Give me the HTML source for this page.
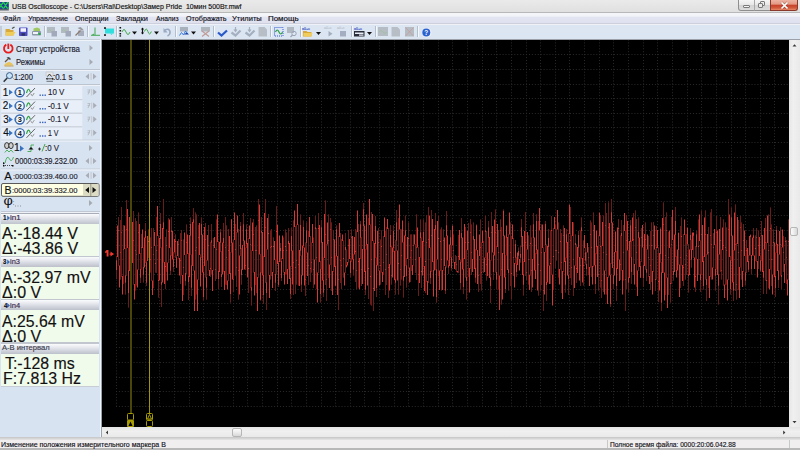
<!DOCTYPE html>
<html><head><meta charset="utf-8">
<style>
html,body{margin:0;padding:0;width:800px;height:450px;overflow:hidden;background:#d8e3f1;}
.t{position:absolute;white-space:pre;line-height:1;transform-origin:0 0;font-family:"Liberation Sans",sans-serif;-webkit-text-stroke:0.15px currentColor;}
.a{position:absolute;}
svg{position:absolute;overflow:visible;}
</style></head><body>
<!-- title bar -->
<div class="a" style="left:0;top:0;width:800px;height:12px;background:linear-gradient(#eaeaea,#e0e0e0);"></div>
<div class="a" style="left:0;top:12px;width:800px;height:1px;background:#b8b8b8;"></div>
<!-- app icon -->
<svg style="left:0;top:0" width="10" height="12"><rect x="0" y="2" width="8.8" height="8.5" fill="#5a6470"/><rect x="0" y="2" width="8.6" height="6.8" fill="#1e3c98"/>
<clipPath id="ic"><rect x="0" y="2" width="8.6" height="6.8"/></clipPath><path clip-path="url(#ic)" d="M0 3.8 q1.1 2.2 2.2 0 t2.2 0 t2.2 0 t2.2 0 M0 7.2 q1.1 -2.2 2.2 0 t2.2 0 t2.2 0 t2.2 0" stroke="#22d848" stroke-width="1.3" fill="none"/></svg>
<!-- window buttons -->
<div class="a" style="left:738px;top:0;width:17px;height:11px;background:linear-gradient(#f6f6f6,#e8e8e8 45%,#d4d4d4 55%,#dcdcdc);border:1px solid #8e8e8e;border-top:none;border-radius:0 0 0 3px;box-sizing:border-box;"></div>
<div class="a" style="left:743px;top:5px;width:7px;height:3px;border:1px solid #7a7a7a;background:#f4f4f4;box-sizing:border-box;border-radius:1px;"></div>
<div class="a" style="left:754px;top:0;width:16px;height:11px;background:linear-gradient(#f6f6f6,#e8e8e8 45%,#d4d4d4 55%,#dcdcdc);border-bottom:1px solid #8e8e8e;border-left:1px solid #a8a8a8;box-sizing:border-box;"></div>
<div class="a" style="left:760px;top:1px;width:5px;height:5px;border:1px solid #7a7a7a;border-radius:1px;box-sizing:border-box;"></div>
<div class="a" style="left:758px;top:3px;width:5px;height:5px;border:1px solid #7a7a7a;background:#e8e8e8;border-radius:1px;box-sizing:border-box;"></div>
<div class="a" style="left:770px;top:0;width:28px;height:11px;background:linear-gradient(#eeb4a4,#e49a84 40%,#c8442c 55%,#d25a3c 80%,#e88a6a);border:1px solid #8a3a2a;border-top:none;border-radius:0 0 3px 0;box-sizing:border-box;"></div>
<svg style="left:780px;top:1px" width="9" height="9"><path d="M1.5 1.5 L7.5 7.5 M7.5 1.5 L1.5 7.5" stroke="#6a3a30" stroke-width="2.6" fill="none" opacity="0.5"/><path d="M1.5 1.5 L7.5 7.5 M7.5 1.5 L1.5 7.5" stroke="#fff" stroke-width="1.7" fill="none"/></svg>
<!-- menu bar -->
<div class="a" style="left:0;top:13px;width:800px;height:10px;background:linear-gradient(#f5f6fa 0,#f2f3f8 30%,#e2e4f1 45%,#dfe1ef 100%);"></div>
<div class="a" style="left:0;top:23px;width:800px;height:1px;background:#cfd0de;"></div>
<!-- toolbar -->
<div class="a" style="left:0;top:24px;width:800px;height:15px;background:#dce6f2;"></div>
<div class="a" style="left:0;top:24px;width:800px;height:1px;background:#eef2f8;"></div>
<div class="a" style="left:0;top:26px;width:2px;height:11px;background:#c4ccd8;"></div>
<svg style="left:0;top:0" width="440" height="40">
<!-- separators -->
<g fill="#b4bfce"><rect x="44" y="26" width="1" height="11"/><rect x="87" y="26" width="1" height="11"/><rect x="116" y="26" width="1" height="11"/><rect x="175" y="26" width="1" height="11"/><rect x="213" y="26" width="1" height="11"/><rect x="270" y="26" width="1" height="11"/><rect x="300" y="26" width="1" height="11"/><rect x="351" y="26" width="1" height="11"/><rect x="375" y="26" width="1" height="11"/><rect x="417" y="26" width="1" height="11"/></g>
<g fill="#f4f7fb"><rect x="45" y="26" width="1" height="11"/><rect x="88" y="26" width="1" height="11"/><rect x="117" y="26" width="1" height="11"/><rect x="176" y="26" width="1" height="11"/><rect x="214" y="26" width="1" height="11"/><rect x="271" y="26" width="1" height="11"/><rect x="301" y="26" width="1" height="11"/><rect x="352" y="26" width="1" height="11"/><rect x="376" y="26" width="1" height="11"/><rect x="418" y="26" width="1" height="11"/></g>
<!-- folder open -->
<path d="M5.5 29 h4 l1 1 h3 v5.5 h-8 z" fill="#d8a838"/>
<path d="M6 32 h9.5 l-2 3.6 h-8 z" fill="#f0cc5a"/>
<path d="M12 28.5 l2.5 -1.5" stroke="#505050" stroke-width="1.2"/>
<!-- floppy -->
<rect x="19" y="27.5" width="8.5" height="8.5" rx="0.8" fill="#4a4cc0"/>
<rect x="20.5" y="28.2" width="5.5" height="3.6" fill="#f4f4ff"/>
<rect x="21.5" y="33.2" width="3.5" height="2.5" fill="#303060"/>
<!-- printer -->
<path d="M33.5 28.5 l3.5 -1 l3 1.2 v3 h-6.5z" fill="#9ec860"/>
<rect x="32" y="31" width="9" height="4.5" rx="1" fill="#8a98a8"/>
<rect x="33" y="32" width="5" height="2" fill="#f0f4f8"/>
<rect x="38.5" y="33" width="2" height="2" fill="#20b040"/>
<!-- gray duo 1 -->
<rect x="47" y="27" width="8" height="6" fill="#b4bac2"/>
<path d="M48 31 q1.5 -3 3 0 t3 0" stroke="#9cc09a" stroke-width="0.8" fill="none"/>
<rect x="51.5" y="31" width="5.5" height="5.5" fill="#a2a9ba"/>
<!-- gray duo 2 -->
<rect x="61" y="27" width="8" height="6" fill="#b4bac2"/>
<path d="M62 31 q1.5 -3 3 0 t3 0" stroke="#9cc09a" stroke-width="0.8" fill="none"/>
<rect x="65.5" y="31" width="5.5" height="5.5" fill="#a2a9ba"/>
<!-- hammer -->
<rect x="78" y="30.5" width="6" height="5.5" fill="#a6adbd"/>
<path d="M75.5 35.5 l5 -5" stroke="#8c7a70" stroke-width="1.2"/>
<path d="M77.5 28 l3 -1 l3 2.5 l-1.5 1z" fill="#9a9aa0"/>
<!-- trigger green -->
<path d="M95 27.5 v7.5 M91 35.3 h9" stroke="#40a850" stroke-width="1" fill="none"/>
<path d="M92 35 l1.2 -1.5 l1.2 1.5z" fill="#40a850"/>
<!-- cyan -->
<rect x="105" y="28.5" width="9" height="5" fill="#30dede"/>
<path d="M110 33.5 l1.5 1.5 l1.5 -1.5z" fill="#30dede"/>
<rect x="104" y="27.3" width="2" height="1.5" fill="#111"/><rect x="104" y="34.3" width="2" height="1.5" fill="#111"/>
<!-- icon 12 -->
<g fill="#111"><rect x="119.5" y="27" width="1.6" height="1.5"/><rect x="119.5" y="30" width="1.6" height="1.5"/><rect x="119.5" y="33" width="1.6" height="1.5"/><rect x="119.5" y="35.3" width="1.6" height="1.3"/></g>
<path d="M122 32 q2 -5 4 0 t4 0" stroke="#48a850" stroke-width="1" fill="none"/>
<path d="M132 31.5 h5 l-2.5 3z" fill="#111"/>
<!-- icon 13 -->
<path d="M142.5 28 v6" stroke="#111" stroke-width="1.2"/><path d="M141 29.5 l1.5 -2 l1.5 2z M141 32.5 l1.5 2 l1.5 -2z" fill="#111"/>
<path d="M144.5 31.5 q1.7 -5 3.4 0 t3.4 0" stroke="#48a850" stroke-width="1" fill="none"/>
<path d="M154 31.5 h5 l-2.5 3z" fill="#111"/>
<!-- undo -->
<path d="M165 30 q4 -2 5 1.5 q0.5 3 -2.5 4.5" stroke="#9aaac4" stroke-width="1.6" fill="none"/>
<path d="M163.5 28 v4.5 h4.2z" fill="#9aaac4"/>
<!-- icon 16 -->
<rect x="180" y="27" width="8" height="4.5" fill="#a8b0bc"/>
<path d="M179.5 35.5 l2 -3 l2 2.5 l2 -4 l2.5 3" stroke="#3a7ae0" stroke-width="1" fill="none"/>
<path d="M184 34.5 h5 l-2.5 -2z" fill="#2040a0"/>
<path d="M191 31.5 h5 l-2.5 3z" fill="#111"/>
<!-- gray X -->
<rect x="201" y="27" width="9" height="4.5" fill="#b0b6be"/>
<path d="M202 31 l7 5.5 M209 31 l-7 5.5" stroke="#c09a96" stroke-width="1.2"/>
<!-- blue check -->
<path d="M218 32.5 l3.5 3 l5.5 -5" stroke="#2a5ac8" stroke-width="2.2" fill="none"/>
<!-- gray checks -->
<path d="M231.5 32.5 l4 3 l5 -5" stroke="#a4b0c0" stroke-width="2.2" fill="none"/>
<path d="M235.5 27 v4 M234 29.5 l1.5 2 l1.5 -2" stroke="#a4b0c0" stroke-width="1.2" fill="none"/>
<path d="M245.5 32.5 l4 3 l5 -5" stroke="#a4b0c0" stroke-width="2.2" fill="none"/>
<path d="M249.5 27 v4 M248 29.5 l1.5 2 l1.5 -2" stroke="#a4b0c0" stroke-width="1.2" fill="none"/>
<!-- gray doc -->
<path d="M258.5 27 h6 l2.5 2.5 v7 h-8.5z" fill="#b8bec6"/>
<!-- green wave box -->
<rect x="274.5" y="27.5" width="8.5" height="8.5" fill="#dce6f6" stroke="#3a5ad0" stroke-width="1" stroke-dasharray="1 1"/>
<path d="M275.5 32 q1.7 -4 3.5 0 t3.5 0" stroke="#30a040" stroke-width="1.2" fill="none"/>
<!-- gray magnifier -->
<rect x="287" y="27" width="7" height="6" fill="#b0b8c2"/>
<circle cx="294" cy="33.5" r="2.2" fill="none" stroke="#9aa4b4" stroke-width="1"/>
<path d="M292.5 35 l-2 2" stroke="#9aa4b4" stroke-width="1.2"/>
<!-- abc folder -->
<text x="302" y="29.6" font-family="Liberation Sans" font-size="3.6" font-weight="700" fill="#3050c0">a0+c</text>
<path d="M303 31 h3.5 l1 1 h4 v4.5 h-8.5z" fill="#d8a838"/><path d="M303.5 33 h9 l-1.5 3.5 h-7.5z" fill="#f0cc5a"/>
<path d="M316 32 h5 l-2.5 3z" fill="#111"/>
<!-- gray play / stop -->
<text x="324" y="29.4" font-family="Liberation Sans" font-size="3.6" fill="#a8b0bc">a0+c</text>
<path d="M328.5 31 l4 2.7 l-4 2.7z" fill="#a4aec0"/>
<text x="337" y="29.4" font-family="Liberation Sans" font-size="3.6" fill="#a8b0bc">a0+c</text>
<rect x="340" y="31" width="6" height="5.5" fill="#a4aec0"/>
<!-- abc window -->
<text x="354" y="29.6" font-family="Liberation Sans" font-size="3.6" font-weight="700" fill="#3050c0">a0+c</text>
<rect x="354" y="31" width="10.5" height="5.5" fill="#2a2e3a"/><rect x="355" y="32.5" width="8.5" height="1.5" fill="#e8ecf4"/><rect x="359" y="34.5" width="4.5" height="1.2" fill="#e8ecf4"/>
<path d="M367 32 h5 l-2.5 3z" fill="#111"/>
<!-- gray set -->
<rect x="378" y="27" width="10" height="9" fill="#b6bcc4"/>
<path d="M379 32 q2 -3 4 0 t4 0" stroke="#9cc09a" stroke-width="0.8" fill="none"/>
<path d="M391.5 27 h6 l2.5 2.5 v7 h-8.5z" fill="#b8bec6"/>
<rect x="405" y="27" width="9" height="9.5" fill="#b6bcc4"/>
<path d="M405.5 27.5 l8 8.5 M413.5 27.5 l-8 8.5" stroke="#c89e9a" stroke-width="0.8"/>
<!-- help -->
<circle cx="426.8" cy="32.7" r="4.6" fill="#f4f6fa"/>
<circle cx="426.3" cy="32.5" r="4" fill="#2a62d0"/>
<text x="424.2" y="35.3" font-family="Liberation Sans" font-size="6.5" font-weight="700" fill="#fff">?</text>
</svg>

<!-- left panel -->
<div class="a" style="left:0;top:39px;width:102px;height:398px;background:#d8e3f1;"></div>
<div class="a" style="left:0;top:39px;width:102px;height:1px;background:#c8d0da;"></div><div class="a" style="left:0;top:40px;width:101px;height:1px;background:#eef3f9;"></div>
<div class="a" style="left:100px;top:39px;width:1px;height:399px;background:#f2f5fa;"></div>
<div class="a" style="left:101px;top:39px;width:1px;height:399px;background:#9aa2ae;"></div>
<!-- rows top -->
<svg style="left:0;top:0" width="102" height="440">
<!-- power icon -->
<path d="M6.3 44.6 A4.3 4.3 0 1 0 10.3 44.6" fill="none" stroke="#e81c1c" stroke-width="1.8"/>
<rect x="7.4" y="43.6" width="1.8" height="5.4" fill="#e81c1c"/>
<!-- hammer hat icon -->
<path d="M3.5 65.5 q3 -4 6 -3.5 q3 0.5 4 3.5 z" fill="#e8c460"/>
<path d="M4.5 66 h9" stroke="#c09030" stroke-width="0.8"/>
<path d="M5 62 l4 -4" stroke="#6a5040" stroke-width="1.2"/>
<path d="M6.5 57.5 l2.5 -0.5 l2 2 l-1 1z" fill="#404a50"/>
<!-- menu arrows -->
<path d="M89.5 45 l3.5 3 l-3.5 3z M89.5 59 l3.5 3 l-3.5 3z" fill="#a6aab2"/>
<!-- separators -->
<rect x="1" y="69" width="99" height="1" fill="#bcc4d0"/><rect x="1" y="70" width="99" height="1" fill="#eef2f8"/>
<rect x="1" y="84" width="99" height="1" fill="#bcc4d0"/><rect x="1" y="85" width="99" height="1" fill="#eef2f8"/>
<!-- magnifier -->
<circle cx="9.5" cy="75.6" r="3" fill="#c8e4fa" stroke="#3a5a80" stroke-width="1"/>
<path d="M7.2 78 l-3.5 3.8" stroke="#303840" stroke-width="1.6"/>
<path d="M12.5 77.5 l1 1" stroke="#555" stroke-width="0.8"/>
<!-- time scale icon -->
<rect x="46" y="72" width="7" height="4" fill="#e6e8ea" stroke="#b8bcc4" stroke-width="0.6"/>
<path d="M47.5 76.5 l2 -2.5 l2 2.5" stroke="#222" stroke-width="0.9" fill="none"/>
<path d="M46 78.8 h7.5" stroke="#222" stroke-width="0.8"/>
<path d="M46 78.8 l1.5 -1.3 v2.6z M53.5 78.8 l-1.5 -1.3 v2.6z" fill="#222"/>
<path d="M46.5 81.3 h6.5" stroke="#222" stroke-width="0.6"/>
<!-- lr arrows -->
<path d="M89 73.5 l-3.5 3 l3.5 3z M93 73.5 l3.5 3 l-3.5 3z" fill="#a8adb6"/><rect x="90.5" y="73" width="1.2" height="7" fill="#c8ccd4"/>
<!-- channel rows -->
<rect x="1.3" y="86" width="81" height="54" fill="#e8eff9"/>
<rect x="1.3" y="99" width="81" height="1.2" fill="#c9d0da"/>
<rect x="1.3" y="112.6" width="81" height="1.2" fill="#c9d0da"/>
<rect x="1.3" y="126.2" width="81" height="1.2" fill="#c9d0da"/>
<rect x="1" y="139.6" width="99" height="1" fill="#c4ccd8"/><rect x="1" y="140.6" width="99" height="1" fill="#f0f4f9"/>
<g id="ch">
<path d="M9 89.5 l3.8 2.8 l-3.8 2.8z" fill="#3a72c0"/>
<circle cx="19.8" cy="92.3" r="4.5" fill="#f4f8fc" stroke="#3a6ab0" stroke-width="1.4"/>
<path d="M14.6 90.5 l2 1.8 l-2 1.8z" fill="#3a72c0"/>
<path d="M26.5 93 q1.8 -7 3.8 -1" stroke="#30a040" stroke-width="1.2" fill="none"/>
<path d="M26.5 97 l8.5 -9" stroke="#555" stroke-width="0.9"/>
<path d="M31 94 q1.2 3.5 2.5 0 l0.8 -1" stroke="#888" stroke-width="0.9" fill="none"/>
<g fill="#3a62b8"><rect x="39.5" y="94.5" width="1.4" height="1.4"/><rect x="42" y="94.5" width="1.4" height="1.4"/><rect x="44.5" y="94.5" width="1.4" height="1.4"/></g>
<path d="M87.5 90 h2.5 M87.5 92 h2.5 M88 94.5 l2 -5" stroke="#b0b4bc" stroke-width="0.8"/>
<rect x="91" y="89" width="1.2" height="6.5" fill="#c8ccd4"/>
<path d="M93.2 89 l3.5 3 l-3.5 3z" fill="#a8adb6"/>
</g>
<use href="#ch" y="13.6"/><use href="#ch" y="27.2"/><use href="#ch" y="40.8"/>
<g font-family="Liberation Sans" font-weight="700" fill="#111" font-size="7.4">
<text x="17.7" y="95">1</text><text x="17.7" y="108.6">2</text><text x="17.7" y="122.2">3</text><text x="17.7" y="135.8">4</text>
</g>
<!-- trigger row -->
<ellipse cx="6.8" cy="145.6" rx="2.2" ry="3" fill="#cfcfcf" stroke="#333" stroke-width="1"/>
<ellipse cx="11" cy="145.6" rx="2.2" ry="3" fill="#cfcfcf" stroke="#333" stroke-width="1"/>
<path d="M4.8 152.5 l2.2 -2.5 l2 2 l2 -2 l2.2 2.5" stroke="#40a850" stroke-width="0.9" fill="none"/>
<path d="M20 145.5 l4 3 l-4 3z" fill="#3a72c0"/>
<path d="M27.5 151.5 h3.5 v-6.5 h3" stroke="#40a850" stroke-width="0.9" fill="none"/>
<path d="M28.5 149.5 l2.5 -2.5 l2.5 2.5z" fill="#111"/>
<path d="M38 149 h3" stroke="#111" stroke-width="0.8"/><path d="M39.5 147.5 v3" stroke="#111" stroke-width="0.8"/>
<path d="M42 151.5 l3 -7.5" stroke="#40a850" stroke-width="1" fill="none"/>
<path d="M89 145 l3.5 3 l-3.5 3z" fill="#a6aab2"/>
<!-- timestamp row icon -->
<path d="M5 163 q2 -9 4.5 -4 q2 4 4 -2" stroke="#40a850" stroke-width="0.9" fill="none"/>
<path d="M3 165.5 h10" stroke="#222" stroke-width="0.8" stroke-dasharray="1 1"/>
<path d="M3 162 l2 1.3 l-2 1.3z" fill="#111"/>
<rect x="3" y="165" width="1.5" height="1.5" fill="#111"/><rect x="12" y="165" width="1.5" height="1.5" fill="#111"/>
<path d="M89 158 l-3.5 3 l3.5 3z M93 158 l3.5 3 l-3.5 3z" fill="#a8adb6"/><rect x="90.5" y="157.5" width="1.2" height="7" fill="#c8ccd4"/>
<rect x="1" y="168.5" width="99" height="1" fill="#c4ccd8"/><rect x="1" y="169.5" width="99" height="1" fill="#f0f4f9"/>
<path d="M89 172.5 l-3.5 3 l3.5 3z M93 172.5 l3.5 3 l-3.5 3z" fill="#a8adb6"/><rect x="90.5" y="172" width="1.2" height="7" fill="#c8ccd4"/>
<!-- B box -->
<rect x="1.5" y="183.5" width="97.5" height="12.8" rx="1.5" fill="#ffffe3" stroke="#5a5a5a" stroke-width="1"/>
<rect x="83" y="184" width="15.5" height="12" fill="#dcdcc4"/>
<rect x="90.3" y="184" width="1" height="12" fill="#9a9a88"/>
<path d="M89 187 l-3.8 3 l3.8 3z M92.5 187 l3.8 3 l-3.8 3z" fill="#111"/>
<!-- phi row -->
<text x="3.6" y="205" font-family="Liberation Sans" font-size="12.5" fill="#111" transform="translate(3.6 205) scale(1.15 1) translate(-3.6 -205)">φ</text>
<g fill="#8a8f9a"><rect x="15" y="205.5" width="1" height="1"/><rect x="17.5" y="205.5" width="1" height="1"/><rect x="20" y="205.5" width="1" height="1"/><rect x="13.2" y="201" width="0.9" height="0.9"/><rect x="13.2" y="204" width="0.9" height="0.9"/></g>
<path d="M89 200 l3.5 3 l-3.5 3z" fill="#a6aab2"/>
<rect x="1" y="211" width="99" height="1" fill="#c0c8d4"/><rect x="1" y="212" width="99" height="1" fill="#eef2f8"/>
</svg>
<!-- value panels -->
<div class="a" style="left:1px;top:213px;width:98px;height:11px;background:linear-gradient(#a8adb8 0,#a8adb8 7%,#fafbfc 10%,#e6e8ee 40%,#bfc3cc 100%);"></div>
<div class="a" style="left:1px;top:224px;width:98px;height:31.5px;background:#f1fbec;"></div>
<div class="a" style="left:1px;top:255.5px;width:98px;height:1.5px;background:#c2c6ce;"></div>
<div class="a" style="left:1px;top:257px;width:98px;height:10px;background:linear-gradient(#fafbfc 0,#e6e8ee 35%,#bcc0ca 100%);"></div>
<div class="a" style="left:1px;top:267px;width:98px;height:31.5px;background:#f1fbec;"></div>
<div class="a" style="left:1px;top:298.5px;width:98px;height:1.5px;background:#c2c6ce;"></div>
<div class="a" style="left:1px;top:300px;width:98px;height:10px;background:linear-gradient(#fafbfc 0,#e6e8ee 35%,#bcc0ca 100%);"></div>
<div class="a" style="left:1px;top:310px;width:98px;height:32px;background:#f1fbec;"></div>
<div class="a" style="left:1px;top:342px;width:98px;height:1.5px;background:#c2c6ce;"></div>
<div class="a" style="left:1px;top:343.5px;width:98px;height:10px;background:linear-gradient(#fafbfc 0,#e6e8ee 35%,#bcc0ca 100%);"></div>
<div class="a" style="left:1px;top:353.5px;width:98px;height:32px;background:#f1fbec;"></div>
<div class="a" style="left:1px;top:385.5px;width:98px;height:1px;background:#c8ccd4;"></div>
<svg style="left:0;top:0" width="102" height="440">
<path d="M7.2 215.5 l2.8 2.5 l-2.8 2.5z M7.2 259.5 l2.8 2.5 l-2.8 2.5z M7.2 303 l2.8 2.5 l-2.8 2.5z" fill="#3a6ab8"/>
</svg>

<!-- scope -->
<div class="a" style="left:102px;top:39px;width:698px;height:1px;background:#9ca0a8;"></div>
<div class="a" style="left:102px;top:40px;width:687px;height:387px;background:#000;"></div>
<svg style="left:0;top:0" width="800" height="450">
<clipPath id="sc"><rect x="102" y="40" width="687" height="387"/></clipPath>
<g clip-path="url(#sc)">
<g stroke="#2a2a2a" stroke-width="1" stroke-dasharray="1 1.9288" fill="none"><line x1='116.5' y1='406.6' x2='116.5' y2='40' /><line x1='130.5' y1='406.6' x2='130.5' y2='40' /><line x1='145.5' y1='406.6' x2='145.5' y2='40' /><line x1='159.5' y1='406.6' x2='159.5' y2='40' /><line x1='174.5' y1='406.6' x2='174.5' y2='40' /><line x1='189.5' y1='406.6' x2='189.5' y2='40' /><line x1='203.5' y1='406.6' x2='203.5' y2='40' /><line x1='218.5' y1='406.6' x2='218.5' y2='40' /><line x1='233.5' y1='406.6' x2='233.5' y2='40' /><line x1='247.5' y1='406.6' x2='247.5' y2='40' /><line x1='262.5' y1='406.6' x2='262.5' y2='40' /><line x1='277.5' y1='406.6' x2='277.5' y2='40' /><line x1='291.5' y1='406.6' x2='291.5' y2='40' /><line x1='306.5' y1='406.6' x2='306.5' y2='40' /><line x1='321.5' y1='406.6' x2='321.5' y2='40' /><line x1='335.5' y1='406.6' x2='335.5' y2='40' /><line x1='350.5' y1='406.6' x2='350.5' y2='40' /><line x1='364.5' y1='406.6' x2='364.5' y2='40' /><line x1='379.5' y1='406.6' x2='379.5' y2='40' /><line x1='394.5' y1='406.6' x2='394.5' y2='40' /><line x1='408.5' y1='406.6' x2='408.5' y2='40' /><line x1='423.5' y1='406.6' x2='423.5' y2='40' /><line x1='438.5' y1='406.6' x2='438.5' y2='40' /><line x1='452.5' y1='406.6' x2='452.5' y2='40' /><line x1='467.5' y1='406.6' x2='467.5' y2='40' /><line x1='482.5' y1='406.6' x2='482.5' y2='40' /><line x1='496.5' y1='406.6' x2='496.5' y2='40' /><line x1='511.5' y1='406.6' x2='511.5' y2='40' /><line x1='526.5' y1='406.6' x2='526.5' y2='40' /><line x1='540.5' y1='406.6' x2='540.5' y2='40' /><line x1='555.5' y1='406.6' x2='555.5' y2='40' /><line x1='569.5' y1='406.6' x2='569.5' y2='40' /><line x1='584.5' y1='406.6' x2='584.5' y2='40' /><line x1='599.5' y1='406.6' x2='599.5' y2='40' /><line x1='613.5' y1='406.6' x2='613.5' y2='40' /><line x1='628.5' y1='406.6' x2='628.5' y2='40' /><line x1='643.5' y1='406.6' x2='643.5' y2='40' /><line x1='657.5' y1='406.6' x2='657.5' y2='40' /><line x1='672.5' y1='406.6' x2='672.5' y2='40' /><line x1='687.5' y1='406.6' x2='687.5' y2='40' /><line x1='701.5' y1='406.6' x2='701.5' y2='40' /><line x1='716.5' y1='406.6' x2='716.5' y2='40' /><line x1='731.5' y1='406.6' x2='731.5' y2='40' /><line x1='745.5' y1='406.6' x2='745.5' y2='40' /><line x1='760.5' y1='406.6' x2='760.5' y2='40' /><line x1='774.5' y1='406.6' x2='774.5' y2='40' /><line x1='116' y1='54.5' x2='789' y2='54.5' /><line x1='116' y1='69.5' x2='789' y2='69.5' /><line x1='116' y1='84.5' x2='789' y2='84.5' /><line x1='116' y1='98.5' x2='789' y2='98.5' /><line x1='116' y1='113.5' x2='789' y2='113.5' /><line x1='116' y1='127.5' x2='789' y2='127.5' /><line x1='116' y1='142.5' x2='789' y2='142.5' /><line x1='116' y1='157.5' x2='789' y2='157.5' /><line x1='116' y1='171.5' x2='789' y2='171.5' /><line x1='116' y1='186.5' x2='789' y2='186.5' /><line x1='116' y1='201.5' x2='789' y2='201.5' /><line x1='116' y1='215.5' x2='789' y2='215.5' /><line x1='116' y1='230.5' x2='789' y2='230.5' /><line x1='116' y1='245.5' x2='789' y2='245.5' /><line x1='116' y1='259.5' x2='789' y2='259.5' /><line x1='116' y1='274.5' x2='789' y2='274.5' /><line x1='116' y1='289.5' x2='789' y2='289.5' /><line x1='116' y1='303.5' x2='789' y2='303.5' /><line x1='116' y1='318.5' x2='789' y2='318.5' /><line x1='116' y1='333.5' x2='789' y2='333.5' /><line x1='116' y1='347.5' x2='789' y2='347.5' /><line x1='116' y1='362.5' x2='789' y2='362.5' /><line x1='116' y1='377.5' x2='789' y2='377.5' /><line x1='116' y1='391.5' x2='789' y2='391.5' /><line x1='116' y1='406.5' x2='789' y2='406.5' /></g>
<path fill='rgb(35,9,9)' d=''/>
<path fill='rgb(70,19,18)' d='M120 279h1v1h-1zM125 294h1v1h-1zM128 247h1v1h-1zM128 307h1v1h-1zM131 262h1v1h-1zM133 284h1v1h-1zM135 290h1v1h-1zM136 285h1v1h-1zM138 212h1v1h-1zM141 269h1v1h-1zM143 247h1v1h-1zM143 282h1v1h-1zM146 260h1v1h-1zM148 229h1v1h-1zM150 237h1v1h-1zM150 272h1v1h-1zM155 245h1v1h-1zM155 272h1v1h-1zM158 235h1v1h-1zM158 297h1v1h-1zM161 247h1v1h-1zM163 262h1v1h-1zM166 229h1v1h-1zM170 247h1v1h-1zM175 234h1v1h-1zM176 255h1v1h-1zM181 275h1v1h-1zM183 239h1v1h-1zM185 254h1v1h-1zM185 285h1v1h-1zM186 224h1v1h-1zM190 217h1v1h-1zM191 254h1v1h-1zM195 212h1v1h-1zM195 299h1v1h-1zM196 214h1v1h-1zM196 294h1v1h-1zM200 254h1v1h-1zM201 217h1v1h-1zM203 265h1v1h-1zM203 300h1v1h-1zM205 277h1v1h-1zM206 299h1v1h-1zM208 270h1v1h-1zM211 274h1v1h-1zM213 270h1v1h-1zM215 247h1v1h-1zM216 219h1v1h-1zM225 284h1v1h-1zM226 225h1v1h-1zM230 302h1v1h-1zM231 252h1v1h-1zM233 239h1v1h-1zM235 275h1v1h-1zM238 299h1v1h-1zM241 284h1v1h-1zM243 245h1v1h-1zM245 247h1v1h-1zM246 224h1v1h-1zM251 250h1v1h-1zM251 305h1v1h-1zM253 272h1v1h-1zM256 225h1v1h-1zM258 277h1v1h-1zM260 300h1v1h-1zM268 275h1v1h-1zM270 230h1v1h-1zM270 279h1v1h-1zM273 237h1v1h-1zM273 272h1v1h-1zM275 259h1v1h-1zM276 274h1v1h-1zM283 237h1v1h-1zM283 272h1v1h-1zM285 229h1v1h-1zM285 274h1v1h-1zM286 232h1v1h-1zM286 274h1v1h-1zM288 269h1v1h-1zM293 220h1v1h-1zM296 224h1v1h-1zM296 284h1v1h-1zM298 224h1v1h-1zM298 285h1v1h-1zM300 214h1v1h-1zM301 255h1v1h-1zM303 220h1v1h-1zM305 242h1v1h-1zM306 222h1v1h-1zM311 242h1v1h-1zM311 272h1v1h-1zM313 237h1v1h-1zM320 302h1v1h-1zM321 269h1v1h-1zM323 257h1v1h-1zM325 200h1v1h-1zM328 214h1v1h-1zM331 222h1v1h-1zM335 255h1v1h-1zM336 225h1v1h-1zM343 240h1v1h-1zM343 277h1v1h-1zM346 249h1v1h-1zM346 267h1v1h-1zM348 262h1v1h-1zM350 277h1v1h-1zM351 229h1v1h-1zM353 275h1v1h-1zM358 287h1v1h-1zM363 249h1v1h-1zM366 249h1v1h-1zM370 224h1v1h-1zM370 304h1v1h-1zM371 305h1v1h-1zM373 240h1v1h-1zM376 257h1v1h-1zM380 239h1v1h-1zM380 284h1v1h-1zM381 230h1v1h-1zM381 272h1v1h-1zM390 264h1v1h-1zM391 284h1v1h-1zM393 225h1v1h-1zM395 294h1v1h-1zM398 294h1v1h-1zM400 285h1v1h-1zM401 229h1v1h-1zM401 279h1v1h-1zM403 297h1v1h-1zM405 215h1v1h-1zM406 287h1v1h-1zM408 222h1v1h-1zM410 234h1v1h-1zM411 234h1v1h-1zM413 234h1v1h-1zM413 265h1v1h-1zM416 214h1v1h-1zM420 219h1v1h-1zM420 257h1v1h-1zM421 237h1v1h-1zM423 219h1v1h-1zM425 222h1v1h-1zM430 247h1v1h-1zM436 302h1v1h-1zM438 215h1v1h-1zM440 229h1v1h-1zM441 227h1v1h-1zM441 290h1v1h-1zM443 229h1v1h-1zM443 270h1v1h-1zM445 265h1v1h-1zM446 267h1v1h-1zM451 270h1v1h-1zM453 234h1v1h-1zM453 262h1v1h-1zM460 259h1v1h-1zM460 289h1v1h-1zM461 262h1v1h-1zM465 277h1v1h-1zM466 249h1v1h-1zM466 299h1v1h-1zM471 224h1v1h-1zM473 222h1v1h-1zM473 259h1v1h-1zM475 282h1v1h-1zM476 224h1v1h-1zM476 250h1v1h-1zM478 255h1v1h-1zM480 219h1v1h-1zM481 242h1v1h-1zM481 290h1v1h-1zM485 215h1v1h-1zM486 280h1v1h-1zM491 260h1v1h-1zM495 209h1v1h-1zM495 272h1v1h-1zM496 289h1v1h-1zM498 289h1v1h-1zM500 219h1v1h-1zM501 304h1v1h-1zM503 209h1v1h-1zM506 255h1v1h-1zM508 290h1v1h-1zM510 222h1v1h-1zM511 299h1v1h-1zM518 247h1v1h-1zM518 259h1v1h-1zM520 262h1v1h-1zM523 295h1v1h-1zM528 235h1v1h-1zM528 284h1v1h-1zM530 225h1v1h-1zM530 275h1v1h-1zM531 237h1v1h-1zM533 259h1v1h-1zM536 214h1v1h-1zM538 295h1v1h-1zM540 290h1v1h-1zM541 224h1v1h-1zM543 247h1v1h-1zM545 252h1v1h-1zM546 244h1v1h-1zM550 230h1v1h-1zM555 224h1v1h-1zM556 260h1v1h-1zM558 222h1v1h-1zM558 277h1v1h-1zM560 269h1v1h-1zM563 225h1v1h-1zM565 257h1v1h-1zM565 292h1v1h-1zM571 235h1v1h-1zM573 222h1v1h-1zM575 234h1v1h-1zM576 244h1v1h-1zM578 257h1v1h-1zM580 230h1v1h-1zM581 217h1v1h-1zM583 240h1v1h-1zM583 285h1v1h-1zM585 247h1v1h-1zM585 264h1v1h-1zM586 275h1v1h-1zM590 220h1v1h-1zM590 267h1v1h-1zM591 222h1v1h-1zM593 212h1v1h-1zM598 235h1v1h-1zM598 290h1v1h-1zM600 287h1v1h-1zM601 245h1v1h-1zM603 215h1v1h-1zM606 294h1v1h-1zM608 202h1v1h-1zM608 277h1v1h-1zM613 267h1v1h-1zM615 252h1v1h-1zM620 235h1v1h-1zM621 270h1v1h-1zM623 280h1v1h-1zM625 230h1v1h-1zM628 292h1v1h-1zM630 257h1v1h-1zM631 240h1v1h-1zM635 210h1v1h-1zM635 264h1v1h-1zM638 217h1v1h-1zM645 222h1v1h-1zM645 269h1v1h-1zM651 222h1v1h-1zM656 279h1v1h-1zM658 247h1v1h-1zM660 227h1v1h-1zM660 262h1v1h-1zM663 202h1v1h-1zM666 212h1v1h-1zM670 247h1v1h-1zM670 302h1v1h-1zM673 239h1v1h-1zM673 280h1v1h-1zM678 232h1v1h-1zM681 217h1v1h-1zM681 265h1v1h-1zM685 234h1v1h-1zM685 279h1v1h-1zM688 292h1v1h-1zM691 239h1v1h-1zM691 267h1v1h-1zM696 259h1v1h-1zM698 219h1v1h-1zM700 240h1v1h-1zM701 210h1v1h-1zM703 289h1v1h-1zM705 210h1v1h-1zM705 279h1v1h-1zM710 212h1v1h-1zM711 279h1v1h-1zM715 244h1v1h-1zM715 290h1v1h-1zM716 269h1v1h-1zM718 304h1v1h-1zM721 249h1v1h-1zM721 279h1v1h-1zM723 219h1v1h-1zM723 285h1v1h-1zM725 222h1v1h-1zM726 227h1v1h-1zM726 284h1v1h-1zM730 294h1v1h-1zM731 207h1v1h-1zM735 204h1v1h-1zM736 299h1v1h-1zM740 267h1v1h-1zM741 222h1v1h-1zM741 279h1v1h-1zM745 255h1v1h-1zM745 285h1v1h-1zM750 234h1v1h-1zM750 255h1v1h-1zM751 274h1v1h-1zM755 235h1v1h-1zM758 230h1v1h-1zM760 255h1v1h-1zM765 280h1v1h-1zM766 242h1v1h-1zM768 214h1v1h-1zM770 207h1v1h-1zM770 269h1v1h-1zM771 224h1v1h-1zM773 229h1v1h-1zM775 252h1v1h-1zM780 275h1v1h-1zM785 264h1v1h-1zM788 219h1v1h-1z'/>
<path fill='rgb(105,29,27)' d='M116 256h1v4h-1zM116 270h1v9h-1zM117 225h1v1h-1zM118 217h1v13h-1zM118 231h1v35h-1zM119 265h1v1h-1zM119 287h1v1h-1zM120 220h1v32h-1zM120 253h1v26h-1zM121 207h1v25h-1zM121 233h1v44h-1zM122 294h1v1h-1zM123 225h1v24h-1zM123 250h1v34h-1zM124 225h1v1h-1zM125 248h1v27h-1zM125 283h1v11h-1zM126 200h1v29h-1zM126 230h1v46h-1zM128 248h1v22h-1zM128 293h1v14h-1zM130 199h1v27h-1zM130 227h1v55h-1zM131 263h1v18h-1zM131 301h1v7h-1zM133 211h1v29h-1zM133 241h1v43h-1zM134 299h1v1h-1zM135 218h1v32h-1zM135 251h1v39h-1zM136 221h1v33h-1zM136 255h1v30h-1zM137 269h1v1h-1zM137 287h1v1h-1zM138 213h1v19h-1zM138 233h1v37h-1zM140 253h1v16h-1zM140 278h1v5h-1zM141 234h1v13h-1zM141 248h1v21h-1zM142 229h1v1h-1zM143 248h1v19h-1zM143 275h1v7h-1zM144 237h1v1h-1zM144 267h1v1h-1zM145 223h1v8h-1zM145 238h1v25h-1zM146 261h1v1h-1zM146 283h1v3h-1zM148 230h1v11h-1zM148 242h1v16h-1zM149 257h1v1h-1zM149 267h1v1h-1zM150 238h1v21h-1zM150 260h1v12h-1zM151 228h1v19h-1zM151 248h1v33h-1zM152 280h1v1h-1zM153 228h1v26h-1zM153 255h1v33h-1zM155 246h1v17h-1zM155 264h1v8h-1zM156 217h1v33h-1zM156 251h1v22h-1zM158 236h1v44h-1zM158 281h1v16h-1zM159 280h1v1h-1zM160 213h1v11h-1zM160 239h1v9h-1zM161 248h1v34h-1zM161 285h1v22h-1zM162 282h1v1h-1zM163 199h1v23h-1zM163 229h1v33h-1zM165 237h1v29h-1zM165 267h1v22h-1zM166 230h1v15h-1zM166 246h1v26h-1zM167 262h1v1h-1zM167 280h1v1h-1zM168 218h1v13h-1zM168 232h1v31h-1zM169 219h1v1h-1zM170 248h1v7h-1zM170 271h1v4h-1zM171 217h1v13h-1zM171 232h1v24h-1zM172 259h1v1h-1zM173 252h1v7h-1zM173 267h1v5h-1zM174 252h1v1h-1zM175 235h1v6h-1zM175 242h1v16h-1zM176 256h1v1h-1zM178 239h1v5h-1zM178 245h1v14h-1zM179 275h1v1h-1zM180 233h1v27h-1zM180 261h1v23h-1zM181 230h1v10h-1zM181 241h1v34h-1zM183 240h1v27h-1zM183 268h1v27h-1zM184 232h1v1h-1zM185 255h1v18h-1zM185 281h1v4h-1zM186 225h1v17h-1zM186 243h1v31h-1zM187 234h1v1h-1zM188 253h1v23h-1zM188 282h1v18h-1zM190 218h1v6h-1zM190 236h1v19h-1zM191 255h1v10h-1zM191 288h1v8h-1zM193 208h1v11h-1zM193 223h1v48h-1zM194 270h1v1h-1zM195 213h1v37h-1zM195 251h1v48h-1zM196 215h1v32h-1zM196 248h1v46h-1zM197 279h1v1h-1zM198 225h1v12h-1zM198 238h1v42h-1zM200 255h1v2h-1zM200 286h1v1h-1zM201 218h1v6h-1zM201 235h1v23h-1zM202 234h1v1h-1zM202 272h1v1h-1zM203 266h1v6h-1zM203 297h1v3h-1zM205 223h1v16h-1zM205 240h1v37h-1zM206 260h1v17h-1zM206 288h1v11h-1zM207 260h1v1h-1zM208 225h1v20h-1zM208 246h1v24h-1zM210 242h1v26h-1zM210 269h1v8h-1zM211 224h1v16h-1zM211 243h1v31h-1zM213 238h1v7h-1zM213 246h1v24h-1zM215 248h1v21h-1zM215 270h1v11h-1zM216 220h1v29h-1zM216 250h1v29h-1zM217 214h1v1h-1zM218 241h1v30h-1zM218 279h1v10h-1zM220 229h1v3h-1zM220 243h1v9h-1zM221 251h1v23h-1zM221 277h1v10h-1zM222 242h1v1h-1zM222 274h1v1h-1zM223 223h1v15h-1zM223 243h1v29h-1zM225 217h1v30h-1zM225 248h1v36h-1zM226 226h1v31h-1zM226 258h1v27h-1zM227 280h1v1h-1zM227 289h1v1h-1zM228 229h1v21h-1zM228 251h1v30h-1zM230 252h1v21h-1zM230 294h1v8h-1zM231 243h1v9h-1zM232 242h1v1h-1zM232 279h1v1h-1zM233 240h1v39h-1zM233 280h1v12h-1zM234 212h1v1h-1zM235 224h1v25h-1zM235 250h1v25h-1zM236 232h1v35h-1zM236 268h1v19h-1zM237 215h1v1h-1zM237 232h1v1h-1zM238 229h1v41h-1zM238 271h1v28h-1zM239 255h1v1h-1zM239 294h1v1h-1zM240 222h1v4h-1zM240 249h1v7h-1zM241 248h1v21h-1zM241 275h1v9h-1zM243 213h1v11h-1zM243 241h1v4h-1zM244 240h1v1h-1zM244 269h1v1h-1zM245 248h1v17h-1zM245 266h1v4h-1zM246 225h1v4h-1zM246 244h1v4h-1zM247 277h1v1h-1zM248 238h1v30h-1zM248 269h1v24h-1zM249 225h1v1h-1zM250 218h1v26h-1zM250 245h1v43h-1zM251 251h1v36h-1zM251 291h1v14h-1zM252 222h1v1h-1zM253 219h1v15h-1zM253 235h1v37h-1zM254 295h1v1h-1zM255 227h1v23h-1zM255 251h1v34h-1zM256 226h1v24h-1zM256 251h1v42h-1zM258 199h1v21h-1zM258 221h1v56h-1zM259 204h1v1h-1zM259 254h1v1h-1zM260 254h1v18h-1zM261 217h1v14h-1zM261 233h1v40h-1zM262 275h1v1h-1zM263 256h1v19h-1zM263 295h1v9h-1zM265 199h1v28h-1zM265 228h1v55h-1zM266 249h1v33h-1zM266 293h1v17h-1zM267 249h1v1h-1zM268 214h1v19h-1zM268 234h1v41h-1zM270 231h1v16h-1zM270 248h1v31h-1zM271 229h1v17h-1zM271 247h1v29h-1zM273 238h1v8h-1zM273 247h1v25h-1zM275 260h1v14h-1zM275 283h1v8h-1zM276 206h1v25h-1zM276 232h1v42h-1zM278 261h1v2h-1zM278 285h1v2h-1zM279 235h1v1h-1zM280 243h1v5h-1zM280 251h1v11h-1zM281 258h1v3h-1zM281 278h1v3h-1zM282 235h1v1h-1zM283 238h1v12h-1zM283 251h1v21h-1zM284 284h1v1h-1zM285 230h1v16h-1zM285 247h1v27h-1zM286 233h1v17h-1zM286 251h1v23h-1zM288 228h1v13h-1zM288 244h1v25h-1zM290 266h1v12h-1zM290 294h1v5h-1zM291 228h1v8h-1zM291 251h1v16h-1zM292 250h1v1h-1zM292 284h1v1h-1zM293 221h1v41h-1zM293 263h1v32h-1zM294 210h1v1h-1zM295 226h1v41h-1zM295 268h1v26h-1zM296 225h1v35h-1zM296 261h1v23h-1zM298 225h1v39h-1zM298 265h1v20h-1zM300 215h1v10h-1zM300 251h1v5h-1zM301 256h1v19h-1zM301 285h1v7h-1zM302 245h1v1h-1zM302 275h1v1h-1zM303 221h1v6h-1zM303 246h1v2h-1zM304 247h1v1h-1zM304 285h1v1h-1zM305 243h1v36h-1zM305 280h1v16h-1zM306 223h1v7h-1zM306 243h1v10h-1zM307 252h1v1h-1zM308 231h1v34h-1zM308 266h1v19h-1zM310 236h1v32h-1zM310 269h1v13h-1zM311 243h1v19h-1zM311 263h1v9h-1zM313 238h1v31h-1zM313 270h1v18h-1zM314 259h1v1h-1zM314 284h1v1h-1zM315 216h1v11h-1zM315 229h1v31h-1zM316 228h1v29h-1zM316 258h1v31h-1zM317 272h1v1h-1zM317 302h1v1h-1zM318 213h1v15h-1zM318 229h1v44h-1zM320 261h1v8h-1zM320 294h1v8h-1zM321 220h1v7h-1zM321 243h1v26h-1zM322 280h1v1h-1zM323 258h1v22h-1zM323 293h1v4h-1zM325 201h1v33h-1zM325 235h1v50h-1zM326 244h1v35h-1zM326 280h1v21h-1zM327 222h1v1h-1zM327 244h1v1h-1zM328 215h1v25h-1zM328 241h1v37h-1zM329 264h1v1h-1zM330 218h1v11h-1zM330 230h1v35h-1zM331 223h1v34h-1zM331 258h1v33h-1zM333 230h1v9h-1zM333 240h1v32h-1zM334 239h1v1h-1zM335 256h1v10h-1zM336 226h1v3h-1zM336 256h1v1h-1zM338 236h1v43h-1zM338 280h1v30h-1zM340 233h1v27h-1zM340 261h1v22h-1zM341 239h1v26h-1zM341 266h1v23h-1zM342 234h1v1h-1zM343 241h1v17h-1zM343 259h1v18h-1zM344 272h1v1h-1zM344 285h1v1h-1zM345 233h1v14h-1zM345 250h1v23h-1zM346 250h1v15h-1zM347 265h1v1h-1zM348 230h1v15h-1zM348 246h1v16h-1zM350 258h1v3h-1zM350 273h1v4h-1zM351 230h1v7h-1zM351 238h1v24h-1zM352 259h1v1h-1zM353 254h1v5h-1zM353 270h1v5h-1zM354 254h1v1h-1zM355 229h1v22h-1zM355 252h1v30h-1zM356 231h1v39h-1zM356 271h1v18h-1zM357 210h1v1h-1zM358 224h1v37h-1zM358 262h1v25h-1zM359 289h1v1h-1zM360 221h1v3h-1zM360 238h1v21h-1zM361 237h1v32h-1zM361 270h1v16h-1zM363 203h1v6h-1zM363 226h1v23h-1zM364 225h1v1h-1zM365 249h1v22h-1zM365 290h1v5h-1zM366 214h1v1h-1zM366 245h1v4h-1zM367 285h1v1h-1zM368 218h1v50h-1zM368 269h1v30h-1zM370 225h1v51h-1zM370 277h1v27h-1zM371 212h1v47h-1zM371 260h1v45h-1zM373 241h1v47h-1zM373 289h1v22h-1zM375 216h1v10h-1zM375 244h1v14h-1zM376 258h1v7h-1zM376 288h1v9h-1zM377 265h1v1h-1zM378 228h1v14h-1zM378 243h1v28h-1zM379 270h1v1h-1zM379 285h1v1h-1zM380 240h1v25h-1zM380 266h1v18h-1zM381 231h1v15h-1zM381 247h1v25h-1zM383 236h1v26h-1zM383 263h1v12h-1zM384 217h1v1h-1zM385 231h1v38h-1zM385 270h1v25h-1zM386 227h1v27h-1zM386 255h1v30h-1zM388 228h1v39h-1zM388 268h1v30h-1zM389 290h1v1h-1zM390 225h1v10h-1zM390 247h1v17h-1zM391 246h1v29h-1zM391 276h1v8h-1zM392 247h1v1h-1zM392 277h1v1h-1zM393 226h1v5h-1zM393 248h1v4h-1zM395 240h1v39h-1zM395 283h1v11h-1zM396 210h1v12h-1zM396 241h1v10h-1zM397 250h1v1h-1zM397 280h1v1h-1zM398 218h1v45h-1zM398 264h1v30h-1zM399 204h1v1h-1zM399 229h1v1h-1zM400 229h1v40h-1zM400 270h1v15h-1zM401 230h1v25h-1zM401 256h1v23h-1zM402 220h1v1h-1zM402 242h1v1h-1zM403 242h1v34h-1zM403 281h1v16h-1zM404 235h1v1h-1zM405 216h1v14h-1zM405 236h1v30h-1zM406 258h1v7h-1zM406 276h1v11h-1zM408 223h1v15h-1zM408 239h1v29h-1zM409 267h1v1h-1zM409 282h1v1h-1zM410 235h1v22h-1zM410 258h1v24h-1zM411 235h1v15h-1zM411 251h1v20h-1zM413 235h1v10h-1zM413 246h1v19h-1zM414 234h1v1h-1zM414 244h1v1h-1zM415 244h1v15h-1zM415 260h1v13h-1zM416 215h1v32h-1zM416 248h1v32h-1zM417 227h1v1h-1zM417 247h1v1h-1zM418 247h1v27h-1zM418 275h1v21h-1zM420 220h1v12h-1zM420 238h1v19h-1zM421 238h1v33h-1zM421 272h1v16h-1zM422 275h1v1h-1zM423 220h1v12h-1zM423 242h1v25h-1zM425 223h1v38h-1zM425 262h1v31h-1zM426 215h1v27h-1zM426 243h1v39h-1zM428 207h1v32h-1zM428 240h1v43h-1zM429 215h1v1h-1zM430 248h1v23h-1zM430 278h1v6h-1zM431 210h1v25h-1zM431 236h1v36h-1zM433 261h1v9h-1zM433 296h1v1h-1zM434 270h1v1h-1zM435 213h1v12h-1zM435 230h1v40h-1zM436 259h1v10h-1zM436 297h1v5h-1zM437 259h1v1h-1zM438 216h1v22h-1zM438 239h1v37h-1zM439 270h1v1h-1zM440 230h1v11h-1zM440 242h1v29h-1zM441 228h1v31h-1zM441 260h1v30h-1zM443 230h1v10h-1zM443 241h1v29h-1zM444 237h1v1h-1zM445 266h1v1h-1zM445 291h1v3h-1zM446 211h1v14h-1zM446 236h1v31h-1zM447 235h1v1h-1zM447 260h1v1h-1zM448 260h1v5h-1zM448 268h1v6h-1zM449 244h1v1h-1zM450 230h1v7h-1zM450 245h1v13h-1zM451 245h1v12h-1zM451 268h1v2h-1zM452 225h1v1h-1zM452 245h1v1h-1zM453 235h1v15h-1zM453 251h1v11h-1zM455 255h1v7h-1zM455 263h1v7h-1zM456 256h1v8h-1zM456 265h1v7h-1zM457 272h1v1h-1zM458 235h1v21h-1zM458 257h1v16h-1zM460 260h1v2h-1zM460 283h1v6h-1zM461 218h1v15h-1zM461 238h1v24h-1zM462 237h1v1h-1zM462 269h1v1h-1zM463 258h1v11h-1zM463 287h1v7h-1zM465 227h1v15h-1zM465 243h1v34h-1zM466 250h1v27h-1zM466 281h1v18h-1zM467 230h1v1h-1zM468 223h1v19h-1zM468 243h1v34h-1zM469 292h1v1h-1zM470 219h1v13h-1zM470 233h1v36h-1zM471 225h1v27h-1zM471 253h1v22h-1zM473 223h1v13h-1zM473 240h1v19h-1zM475 249h1v19h-1zM475 278h1v4h-1zM478 256h1v19h-1zM478 276h1v16h-1zM479 234h1v1h-1zM480 220h1v27h-1zM480 248h1v36h-1zM481 243h1v29h-1zM481 273h1v17h-1zM482 230h1v1h-1zM483 241h1v21h-1zM483 263h1v10h-1zM484 257h1v1h-1zM485 216h1v14h-1zM485 232h1v26h-1zM486 231h1v33h-1zM486 265h1v15h-1zM487 252h1v1h-1zM488 221h1v6h-1zM488 238h1v15h-1zM490 260h1v17h-1zM490 286h1v17h-1zM491 212h1v20h-1zM491 233h1v27h-1zM492 252h1v1h-1zM493 252h1v3h-1zM493 272h1v8h-1zM494 219h1v1h-1zM494 255h1v1h-1zM495 210h1v22h-1zM495 233h1v39h-1zM496 246h1v26h-1zM496 280h1v9h-1zM498 230h1v22h-1zM498 253h1v36h-1zM499 275h1v1h-1zM500 220h1v10h-1zM500 231h1v45h-1zM501 227h1v42h-1zM501 270h1v34h-1zM502 299h1v1h-1zM503 210h1v1h-1zM503 236h1v18h-1zM504 235h1v1h-1zM504 277h1v1h-1zM505 255h1v22h-1zM505 289h1v4h-1zM506 225h1v1h-1zM506 238h1v17h-1zM508 234h1v35h-1zM508 273h1v17h-1zM509 212h1v1h-1zM509 234h1v1h-1zM510 223h1v29h-1zM510 253h1v33h-1zM511 236h1v37h-1zM511 274h1v25h-1zM512 224h1v1h-1zM513 238h1v19h-1zM513 258h1v18h-1zM514 287h1v1h-1zM515 240h1v4h-1zM515 258h1v6h-1zM516 257h1v7h-1zM516 272h1v5h-1zM517 252h1v1h-1zM518 248h1v3h-1zM518 256h1v3h-1zM519 270h1v1h-1zM520 246h1v8h-1zM520 258h1v4h-1zM521 219h1v8h-1zM521 237h1v10h-1zM523 261h1v13h-1zM523 285h1v10h-1zM525 212h1v30h-1zM525 243h1v33h-1zM526 249h1v23h-1zM526 273h1v7h-1zM527 249h1v1h-1zM528 236h1v23h-1zM528 260h1v24h-1zM530 226h1v17h-1zM530 244h1v31h-1zM531 238h1v32h-1zM531 271h1v21h-1zM532 287h1v1h-1zM533 213h1v11h-1zM533 238h1v21h-1zM534 237h1v1h-1zM534 270h1v1h-1zM535 253h1v17h-1zM536 215h1v6h-1zM536 250h1v4h-1zM537 249h1v1h-1zM537 290h1v1h-1zM538 221h1v43h-1zM538 265h1v30h-1zM539 230h1v1h-1zM540 230h1v40h-1zM540 271h1v19h-1zM541 225h1v27h-1zM541 253h1v32h-1zM542 224h1v1h-1zM543 248h1v42h-1zM543 291h1v20h-1zM544 294h1v1h-1zM545 221h1v3h-1zM545 245h1v7h-1zM546 245h1v37h-1zM546 285h1v16h-1zM547 282h1v1h-1zM548 229h1v9h-1zM548 247h1v19h-1zM549 265h1v1h-1zM550 231h1v32h-1zM550 264h1v20h-1zM551 216h1v14h-1zM551 231h1v44h-1zM552 274h1v1h-1zM552 305h1v1h-1zM553 228h1v28h-1zM553 257h1v33h-1zM555 225h1v25h-1zM555 251h1v17h-1zM556 229h1v21h-1zM556 251h1v9h-1zM557 229h1v1h-1zM558 223h1v29h-1zM558 253h1v24h-1zM559 284h1v1h-1zM560 229h1v12h-1zM560 242h1v27h-1zM561 233h1v29h-1zM561 263h1v30h-1zM563 226h1v9h-1zM563 236h1v36h-1zM565 258h1v3h-1zM565 285h1v7h-1zM566 229h1v5h-1zM566 243h1v15h-1zM567 275h1v1h-1zM568 233h1v42h-1zM568 279h1v16h-1zM569 204h1v1h-1zM570 207h1v33h-1zM570 241h1v37h-1zM571 236h1v31h-1zM571 268h1v17h-1zM573 223h1v36h-1zM573 260h1v36h-1zM574 265h1v1h-1zM575 235h1v8h-1zM575 245h1v21h-1zM576 245h1v23h-1zM576 269h1v14h-1zM578 231h1v4h-1zM578 248h1v9h-1zM579 280h1v1h-1zM580 231h1v34h-1zM580 266h1v20h-1zM581 218h1v9h-1zM581 231h1v28h-1zM582 282h1v1h-1zM583 241h1v24h-1zM583 266h1v19h-1zM585 248h1v4h-1zM585 261h1v3h-1zM586 252h1v12h-1zM586 269h1v6h-1zM587 252h1v1h-1zM588 247h1v10h-1zM588 258h1v17h-1zM590 221h1v13h-1zM590 235h1v32h-1zM591 223h1v24h-1zM591 248h1v29h-1zM592 284h1v1h-1zM593 213h1v17h-1zM593 231h1v36h-1zM594 265h1v1h-1zM595 253h1v12h-1zM595 284h1v10h-1zM596 230h1v1h-1zM596 247h1v7h-1zM598 236h1v38h-1zM598 275h1v15h-1zM599 212h1v1h-1zM600 215h1v31h-1zM600 247h1v40h-1zM601 246h1v34h-1zM601 281h1v17h-1zM603 216h1v36h-1zM603 253h1v39h-1zM604 270h1v1h-1zM604 294h1v1h-1zM605 203h1v22h-1zM605 226h1v45h-1zM606 213h1v41h-1zM606 255h1v39h-1zM608 203h1v24h-1zM608 228h1v49h-1zM609 275h1v1h-1zM610 263h1v12h-1zM610 304h1v3h-1zM611 199h1v13h-1zM611 223h1v41h-1zM612 222h1v1h-1zM613 268h1v7h-1zM613 284h1v5h-1zM614 275h1v1h-1zM615 231h1v1h-1zM616 251h1v17h-1zM616 286h1v15h-1zM617 227h1v1h-1zM618 219h1v9h-1zM618 229h1v31h-1zM619 259h1v1h-1zM620 236h1v28h-1zM620 265h1v15h-1zM621 220h1v13h-1zM621 236h1v34h-1zM622 294h1v1h-1zM623 225h1v27h-1zM623 253h1v27h-1zM625 231h1v48h-1zM625 280h1v31h-1zM626 215h1v25h-1zM626 241h1v48h-1zM627 250h1v1h-1zM628 250h1v27h-1zM628 283h1v9h-1zM630 220h1v5h-1zM630 242h1v15h-1zM631 241h1v16h-1zM631 272h1v12h-1zM632 217h1v1h-1zM633 213h1v26h-1zM633 240h1v35h-1zM634 284h1v1h-1zM635 211h1v16h-1zM635 228h1v36h-1zM636 219h1v33h-1zM636 253h1v34h-1zM637 270h1v1h-1zM638 218h1v14h-1zM638 238h1v33h-1zM639 237h1v1h-1zM640 261h1v5h-1zM641 228h1v9h-1zM641 238h1v24h-1zM642 247h1v1h-1zM643 247h1v18h-1zM643 278h1v9h-1zM645 223h1v16h-1zM645 240h1v29h-1zM646 249h1v20h-1zM646 273h1v8h-1zM647 234h1v1h-1zM647 249h1v1h-1zM648 236h1v21h-1zM648 258h1v19h-1zM650 231h1v34h-1zM650 266h1v24h-1zM651 223h1v22h-1zM651 246h1v36h-1zM652 294h1v1h-1zM653 222h1v13h-1zM653 236h1v36h-1zM654 225h1v1h-1zM654 249h1v1h-1zM655 249h1v30h-1zM655 280h1v11h-1zM656 226h1v21h-1zM656 248h1v31h-1zM658 248h1v33h-1zM658 282h1v20h-1zM659 290h1v1h-1zM660 228h1v1h-1zM660 254h1v8h-1zM661 262h1v10h-1zM661 303h1v8h-1zM663 203h1v21h-1zM663 225h1v48h-1zM664 272h1v1h-1zM664 300h1v1h-1zM665 217h1v38h-1zM665 256h1v39h-1zM666 213h1v17h-1zM666 231h1v47h-1zM667 277h1v1h-1zM668 232h1v25h-1zM668 258h1v37h-1zM669 230h1v1h-1zM670 248h1v35h-1zM670 284h1v18h-1zM671 217h1v27h-1zM671 245h1v39h-1zM673 240h1v31h-1zM673 275h1v5h-1zM674 234h1v1h-1zM675 207h1v14h-1zM675 235h1v22h-1zM676 256h1v14h-1zM676 277h1v1h-1zM677 249h1v1h-1zM677 270h1v1h-1zM678 250h1v15h-1zM679 264h1v1h-1zM680 226h1v31h-1zM680 258h1v30h-1zM681 218h1v18h-1zM681 237h1v28h-1zM683 234h1v33h-1zM683 268h1v18h-1zM684 219h1v1h-1zM685 235h1v29h-1zM685 265h1v14h-1zM686 234h1v21h-1zM686 256h1v19h-1zM687 227h1v1h-1zM687 244h1v1h-1zM688 244h1v30h-1zM688 276h1v16h-1zM689 249h1v1h-1zM690 228h1v7h-1zM690 240h1v10h-1zM691 240h1v9h-1zM691 260h1v7h-1zM692 232h1v1h-1zM693 232h1v1h-1zM693 236h1v22h-1zM694 257h1v1h-1zM694 287h1v1h-1zM695 246h1v30h-1zM695 277h1v15h-1zM696 231h1v3h-1zM696 247h1v12h-1zM698 220h1v26h-1zM698 247h1v28h-1zM699 214h1v1h-1zM700 241h1v33h-1zM700 280h1v12h-1zM701 211h1v23h-1zM701 235h1v40h-1zM703 256h1v5h-1zM703 286h1v3h-1zM704 217h1v1h-1zM705 211h1v23h-1zM705 235h1v44h-1zM706 254h1v25h-1zM706 285h1v16h-1zM707 254h1v1h-1zM708 227h1v25h-1zM708 253h1v35h-1zM710 213h1v22h-1zM710 236h1v41h-1zM711 209h1v35h-1zM711 245h1v34h-1zM712 267h1v1h-1zM712 279h1v1h-1zM713 233h1v14h-1zM713 248h1v20h-1zM715 245h1v24h-1zM715 276h1v14h-1zM716 216h1v16h-1zM716 233h1v36h-1zM717 230h1v1h-1zM718 254h1v20h-1zM718 286h1v18h-1zM719 254h1v1h-1zM720 217h1v23h-1zM720 241h1v31h-1zM721 250h1v20h-1zM721 271h1v8h-1zM722 227h1v1h-1zM723 220h1v25h-1zM723 246h1v39h-1zM724 284h1v1h-1zM725 223h1v24h-1zM725 248h1v37h-1zM726 228h1v22h-1zM726 251h1v33h-1zM727 279h1v1h-1zM727 300h1v1h-1zM728 199h1v30h-1zM728 230h1v50h-1zM729 214h1v1h-1zM730 256h1v4h-1zM730 289h1v5h-1zM731 208h1v9h-1zM731 236h1v25h-1zM732 235h1v1h-1zM732 282h1v1h-1zM733 250h1v32h-1zM733 291h1v10h-1zM734 212h1v1h-1zM734 250h1v1h-1zM735 205h1v39h-1zM735 245h1v46h-1zM736 243h1v41h-1zM736 285h1v14h-1zM738 220h1v32h-1zM738 253h1v37h-1zM740 216h1v11h-1zM740 228h1v39h-1zM741 223h1v27h-1zM741 251h1v28h-1zM743 224h1v16h-1zM743 241h1v31h-1zM744 230h1v1h-1zM745 256h1v16h-1zM745 281h1v4h-1zM746 240h1v10h-1zM746 251h1v22h-1zM748 255h1v6h-1zM748 270h1v2h-1zM749 255h1v1h-1zM750 237h1v18h-1zM751 269h1v5h-1zM752 237h1v1h-1zM752 255h1v1h-1zM753 228h1v7h-1zM753 238h1v18h-1zM754 255h1v1h-1zM755 236h1v12h-1zM755 249h1v12h-1zM756 228h1v9h-1zM756 238h1v24h-1zM757 277h1v1h-1zM758 231h1v14h-1zM758 246h1v23h-1zM760 256h1v4h-1zM760 271h1v1h-1zM761 221h1v14h-1zM761 236h1v25h-1zM763 249h1v22h-1zM763 278h1v16h-1zM764 249h1v1h-1zM765 218h1v24h-1zM765 243h1v37h-1zM766 243h1v37h-1zM766 281h1v13h-1zM767 215h1v1h-1zM768 215h1v35h-1zM768 251h1v37h-1zM769 289h1v1h-1zM770 208h1v20h-1zM770 229h1v40h-1zM771 225h1v34h-1zM771 260h1v26h-1zM772 274h1v1h-1zM772 294h1v1h-1zM773 230h1v12h-1zM773 243h1v32h-1zM774 242h1v1h-1zM775 253h1v23h-1zM775 288h1v9h-1zM776 226h1v4h-1zM776 245h1v8h-1zM778 254h1v16h-1zM778 280h1v8h-1zM779 254h1v1h-1zM780 227h1v17h-1zM780 245h1v30h-1zM781 247h1v28h-1zM781 277h1v12h-1zM782 229h1v1h-1zM782 247h1v1h-1zM783 236h1v16h-1zM783 253h1v19h-1zM785 237h1v4h-1zM785 242h1v22h-1zM786 240h1v17h-1zM786 258h1v26h-1zM787 279h1v1h-1zM787 295h1v1h-1zM788 220h1v21h-1zM788 242h1v38h-1z'/>
<path fill='rgb(140,38,36)' d=''/>
<path fill='rgb(175,48,45)' d='M116 260h1v1h-1zM118 230h1v1h-1zM120 252h1v1h-1zM121 232h1v1h-1zM123 249h1v1h-1zM125 275h1v1h-1zM125 282h1v1h-1zM126 229h1v1h-1zM128 270h1v1h-1zM133 240h1v1h-1zM135 250h1v1h-1zM136 254h1v1h-1zM138 232h1v1h-1zM140 277h1v1h-1zM141 247h1v1h-1zM143 274h1v1h-1zM146 262h1v1h-1zM146 282h1v1h-1zM150 259h1v1h-1zM151 247h1v1h-1zM153 254h1v1h-1zM156 250h1v1h-1zM161 284h1v1h-1zM163 222h1v1h-1zM166 245h1v1h-1zM170 255h1v1h-1zM170 270h1v1h-1zM171 230h1v1h-1zM176 257h1v1h-1zM176 267h1v1h-1zM178 244h1v1h-1zM180 260h1v1h-1zM181 240h1v1h-1zM183 267h1v1h-1zM186 242h1v1h-1zM190 235h1v1h-1zM191 265h1v1h-1zM191 287h1v1h-1zM193 219h1v1h-1zM193 222h1v1h-1zM195 250h1v1h-1zM196 247h1v1h-1zM198 237h1v1h-1zM200 257h1v1h-1zM205 239h1v1h-1zM206 287h1v1h-1zM208 245h1v1h-1zM211 240h1v1h-1zM211 242h1v1h-1zM213 245h1v1h-1zM215 269h1v1h-1zM216 249h1v1h-1zM220 232h1v1h-1zM220 242h1v1h-1zM225 247h1v1h-1zM226 257h1v1h-1zM228 250h1v1h-1zM231 219h1v1h-1zM233 279h1v1h-1zM235 249h1v1h-1zM236 267h1v1h-1zM238 270h1v1h-1zM241 269h1v1h-1zM243 224h1v1h-1zM245 265h1v1h-1zM246 229h1v1h-1zM250 244h1v1h-1zM251 287h1v1h-1zM251 290h1v1h-1zM253 234h1v1h-1zM255 250h1v1h-1zM256 250h1v1h-1zM258 220h1v1h-1zM260 272h1v1h-1zM260 299h1v1h-1zM261 232h1v1h-1zM265 227h1v1h-1zM266 282h1v1h-1zM270 247h1v1h-1zM275 282h1v1h-1zM283 250h1v1h-1zM286 250h1v1h-1zM293 262h1v1h-1zM295 267h1v1h-1zM296 260h1v1h-1zM298 264h1v1h-1zM300 250h1v1h-1zM301 284h1v1h-1zM305 279h1v1h-1zM306 230h1v1h-1zM308 265h1v1h-1zM311 262h1v1h-1zM313 269h1v1h-1zM315 227h1v1h-1zM316 257h1v1h-1zM321 227h1v1h-1zM321 242h1v1h-1zM323 292h1v1h-1zM325 234h1v1h-1zM326 279h1v1h-1zM328 240h1v1h-1zM330 229h1v1h-1zM331 257h1v1h-1zM333 239h1v1h-1zM335 285h1v1h-1zM336 229h1v1h-1zM338 279h1v1h-1zM340 260h1v1h-1zM341 265h1v1h-1zM348 245h1v1h-1zM351 237h1v1h-1zM353 269h1v1h-1zM356 270h1v1h-1zM360 224h1v1h-1zM360 237h1v1h-1zM361 269h1v1h-1zM363 209h1v1h-1zM365 289h1v1h-1zM366 244h1v1h-1zM371 259h1v1h-1zM378 242h1v1h-1zM380 265h1v1h-1zM383 262h1v1h-1zM385 269h1v1h-1zM386 254h1v1h-1zM388 267h1v1h-1zM391 275h1v1h-1zM395 279h1v1h-1zM395 282h1v1h-1zM396 222h1v1h-1zM396 240h1v1h-1zM400 269h1v1h-1zM401 255h1v1h-1zM403 280h1v1h-1zM405 230h1v1h-1zM406 265h1v1h-1zM410 257h1v1h-1zM411 250h1v1h-1zM413 245h1v1h-1zM415 259h1v1h-1zM416 247h1v1h-1zM418 274h1v1h-1zM420 232h1v1h-1zM426 242h1v1h-1zM428 239h1v1h-1zM431 235h1v1h-1zM435 229h1v1h-1zM436 269h1v1h-1zM441 259h1v1h-1zM443 240h1v1h-1zM445 290h1v1h-1zM446 225h1v1h-1zM448 265h1v1h-1zM448 267h1v1h-1zM450 237h1v1h-1zM451 257h1v1h-1zM453 250h1v1h-1zM455 262h1v1h-1zM456 264h1v1h-1zM465 242h1v1h-1zM466 280h1v1h-1zM468 242h1v1h-1zM470 232h1v1h-1zM471 252h1v1h-1zM473 239h1v1h-1zM475 277h1v1h-1zM476 225h1v1h-1zM476 249h1v1h-1zM478 275h1v1h-1zM480 247h1v1h-1zM481 272h1v1h-1zM483 262h1v1h-1zM485 230h1v1h-1zM486 264h1v1h-1zM488 227h1v1h-1zM488 237h1v1h-1zM490 277h1v1h-1zM491 232h1v1h-1zM495 232h1v1h-1zM496 279h1v1h-1zM498 252h1v1h-1zM500 230h1v1h-1zM501 269h1v1h-1zM506 237h1v1h-1zM508 269h1v1h-1zM510 252h1v1h-1zM513 257h1v1h-1zM515 257h1v1h-1zM516 264h1v1h-1zM518 255h1v1h-1zM520 257h1v1h-1zM521 227h1v1h-1zM523 274h1v1h-1zM523 284h1v1h-1zM525 242h1v1h-1zM526 272h1v1h-1zM528 259h1v1h-1zM531 270h1v1h-1zM533 224h1v1h-1zM538 264h1v1h-1zM540 270h1v1h-1zM541 252h1v1h-1zM543 290h1v1h-1zM555 250h1v1h-1zM556 250h1v1h-1zM558 252h1v1h-1zM561 262h1v1h-1zM563 235h1v1h-1zM565 284h1v1h-1zM566 234h1v1h-1zM566 242h1v1h-1zM570 240h1v1h-1zM571 267h1v1h-1zM573 259h1v1h-1zM578 247h1v1h-1zM580 265h1v1h-1zM581 227h1v1h-1zM583 265h1v1h-1zM585 252h1v1h-1zM585 260h1v1h-1zM588 257h1v1h-1zM590 234h1v1h-1zM591 247h1v1h-1zM593 230h1v1h-1zM598 274h1v1h-1zM601 280h1v1h-1zM603 252h1v1h-1zM605 225h1v1h-1zM606 254h1v1h-1zM608 227h1v1h-1zM611 212h1v1h-1zM620 264h1v1h-1zM623 252h1v1h-1zM625 279h1v1h-1zM626 240h1v1h-1zM628 277h1v1h-1zM628 282h1v1h-1zM630 225h1v1h-1zM633 239h1v1h-1zM635 227h1v1h-1zM636 252h1v1h-1zM640 277h1v1h-1zM641 237h1v1h-1zM643 265h1v1h-1zM645 239h1v1h-1zM646 272h1v1h-1zM648 257h1v1h-1zM650 265h1v1h-1zM651 245h1v1h-1zM653 235h1v1h-1zM656 247h1v1h-1zM661 272h1v1h-1zM661 302h1v1h-1zM663 224h1v1h-1zM665 255h1v1h-1zM666 230h1v1h-1zM668 257h1v1h-1zM671 244h1v1h-1zM680 257h1v1h-1zM683 267h1v1h-1zM685 264h1v1h-1zM686 255h1v1h-1zM688 274h1v1h-1zM691 249h1v1h-1zM691 259h1v1h-1zM693 235h1v1h-1zM696 234h1v1h-1zM700 274h1v1h-1zM701 234h1v1h-1zM705 234h1v1h-1zM708 252h1v1h-1zM710 235h1v1h-1zM711 244h1v1h-1zM713 247h1v1h-1zM715 275h1v1h-1zM716 232h1v1h-1zM718 274h1v1h-1zM718 285h1v1h-1zM720 240h1v1h-1zM721 270h1v1h-1zM723 245h1v1h-1zM725 247h1v1h-1zM726 250h1v1h-1zM728 229h1v1h-1zM730 260h1v1h-1zM731 217h1v1h-1zM733 290h1v1h-1zM735 244h1v1h-1zM736 284h1v1h-1zM738 252h1v1h-1zM740 227h1v1h-1zM741 250h1v1h-1zM743 240h1v1h-1zM745 272h1v1h-1zM745 280h1v1h-1zM746 250h1v1h-1zM748 269h1v1h-1zM753 235h1v1h-1zM756 237h1v1h-1zM758 245h1v1h-1zM760 260h1v1h-1zM760 270h1v1h-1zM761 235h1v1h-1zM763 277h1v1h-1zM765 242h1v1h-1zM768 250h1v1h-1zM771 259h1v1h-1zM776 244h1v1h-1zM778 270h1v1h-1zM780 244h1v1h-1zM783 252h1v1h-1zM786 257h1v1h-1z'/>
<path fill='rgb(210,58,54)' d='M116 261h1v9h-1zM117 226h1v31h-1zM119 266h1v21h-1zM122 276h1v18h-1zM124 226h1v23h-1zM125 276h1v6h-1zM127 209h1v39h-1zM128 271h1v22h-1zM129 217h1v54h-1zM130 226h1v1h-1zM131 281h1v20h-1zM132 222h1v41h-1zM134 284h1v15h-1zM137 270h1v17h-1zM139 224h1v30h-1zM140 269h1v8h-1zM142 230h1v18h-1zM143 267h1v7h-1zM144 238h1v29h-1zM145 231h1v7h-1zM146 263h1v19h-1zM147 236h1v25h-1zM148 241h1v1h-1zM149 258h1v9h-1zM152 281h1v14h-1zM154 232h1v14h-1zM155 263h1v1h-1zM157 206h1v30h-1zM158 280h1v1h-1zM159 238h1v42h-1zM160 224h1v15h-1zM161 282h1v2h-1zM162 228h1v54h-1zM163 223h1v6h-1zM164 262h1v22h-1zM165 266h1v1h-1zM167 263h1v17h-1zM168 231h1v1h-1zM169 220h1v28h-1zM170 256h1v14h-1zM171 231h1v1h-1zM172 231h1v28h-1zM173 259h1v8h-1zM174 239h1v13h-1zM175 241h1v1h-1zM176 258h1v9h-1zM177 241h1v15h-1zM179 258h1v17h-1zM182 275h1v26h-1zM184 233h1v22h-1zM185 273h1v8h-1zM187 235h1v19h-1zM188 276h1v6h-1zM189 235h1v42h-1zM190 224h1v11h-1zM191 266h1v21h-1zM192 222h1v44h-1zM193 220h1v2h-1zM194 271h1v40h-1zM197 280h1v31h-1zM199 223h1v32h-1zM200 258h1v28h-1zM201 224h1v11h-1zM202 235h1v37h-1zM203 272h1v25h-1zM204 227h1v39h-1zM206 277h1v10h-1zM207 235h1v25h-1zM209 270h1v6h-1zM210 268h1v1h-1zM211 241h1v1h-1zM212 270h1v21h-1zM214 237h1v11h-1zM217 215h1v27h-1zM218 271h1v8h-1zM219 242h1v30h-1zM220 233h1v9h-1zM221 274h1v3h-1zM222 243h1v31h-1zM223 238h1v5h-1zM224 271h1v19h-1zM227 281h1v8h-1zM229 236h1v38h-1zM230 273h1v21h-1zM231 220h1v23h-1zM232 243h1v36h-1zM234 213h1v27h-1zM237 216h1v16h-1zM239 256h1v38h-1zM240 226h1v23h-1zM241 270h1v5h-1zM242 245h1v25h-1zM243 225h1v16h-1zM244 241h1v28h-1zM246 230h1v14h-1zM247 243h1v34h-1zM248 268h1v1h-1zM249 226h1v13h-1zM251 288h1v2h-1zM252 223h1v28h-1zM254 272h1v23h-1zM257 277h1v34h-1zM259 205h1v49h-1zM260 273h1v26h-1zM261 231h1v1h-1zM262 232h1v43h-1zM263 275h1v20h-1zM264 213h1v44h-1zM266 283h1v10h-1zM267 218h1v31h-1zM268 233h1v1h-1zM269 275h1v23h-1zM271 246h1v1h-1zM272 272h1v16h-1zM273 246h1v1h-1zM274 241h1v19h-1zM275 274h1v8h-1zM276 231h1v1h-1zM277 225h1v39h-1zM278 263h1v22h-1zM279 236h1v26h-1zM280 248h1v3h-1zM281 261h1v17h-1zM282 236h1v23h-1zM284 272h1v12h-1zM285 246h1v1h-1zM287 269h1v15h-1zM288 241h1v3h-1zM289 243h1v36h-1zM290 278h1v16h-1zM291 236h1v15h-1zM292 251h1v33h-1zM294 211h1v16h-1zM297 204h1v21h-1zM299 250h1v36h-1zM300 225h1v25h-1zM301 275h1v9h-1zM302 246h1v29h-1zM303 227h1v19h-1zM304 248h1v37h-1zM306 231h1v12h-1zM307 253h1v23h-1zM309 217h1v20h-1zM310 268h1v1h-1zM312 224h1v19h-1zM314 260h1v24h-1zM315 228h1v1h-1zM317 273h1v29h-1zM318 228h1v1h-1zM319 225h1v37h-1zM320 269h1v25h-1zM321 228h1v14h-1zM322 242h1v38h-1zM323 280h1v12h-1zM324 214h1v44h-1zM327 223h1v21h-1zM329 265h1v23h-1zM332 271h1v24h-1zM334 240h1v27h-1zM335 266h1v19h-1zM336 230h1v26h-1zM337 256h1v39h-1zM339 223h1v14h-1zM342 235h1v6h-1zM343 258h1v1h-1zM344 273h1v12h-1zM345 247h1v3h-1zM346 265h1v2h-1zM347 262h1v3h-1zM349 239h1v20h-1zM350 261h1v12h-1zM352 236h1v23h-1zM353 259h1v10h-1zM354 237h1v17h-1zM355 251h1v1h-1zM357 211h1v21h-1zM358 261h1v1h-1zM359 258h1v31h-1zM360 225h1v12h-1zM362 249h1v35h-1zM363 210h1v16h-1zM364 226h1v46h-1zM365 271h1v18h-1zM366 215h1v29h-1zM367 244h1v41h-1zM368 268h1v1h-1zM369 199h1v26h-1zM370 276h1v1h-1zM372 214h1v27h-1zM373 288h1v1h-1zM374 243h1v48h-1zM375 226h1v18h-1zM376 265h1v23h-1zM377 231h1v34h-1zM379 271h1v14h-1zM381 246h1v1h-1zM382 272h1v10h-1zM384 218h1v19h-1zM387 219h1v10h-1zM389 264h1v26h-1zM390 235h1v12h-1zM392 248h1v29h-1zM393 231h1v17h-1zM394 251h1v29h-1zM395 280h1v2h-1zM396 223h1v17h-1zM397 251h1v29h-1zM398 263h1v1h-1zM399 205h1v24h-1zM402 221h1v21h-1zM403 276h1v4h-1zM404 236h1v41h-1zM405 231h1v5h-1zM406 266h1v10h-1zM407 237h1v22h-1zM408 238h1v1h-1zM409 268h1v14h-1zM412 265h1v10h-1zM414 235h1v9h-1zM417 228h1v19h-1zM419 257h1v26h-1zM420 233h1v5h-1zM421 271h1v1h-1zM422 241h1v34h-1zM423 232h1v10h-1zM424 266h1v25h-1zM425 261h1v1h-1zM427 281h1v14h-1zM429 216h1v32h-1zM430 271h1v7h-1zM432 219h1v43h-1zM433 270h1v26h-1zM434 229h1v41h-1zM435 225h1v4h-1zM436 270h1v27h-1zM437 221h1v38h-1zM438 238h1v1h-1zM439 271h1v19h-1zM440 241h1v1h-1zM442 270h1v20h-1zM444 238h1v28h-1zM445 267h1v23h-1zM446 226h1v10h-1zM447 236h1v24h-1zM448 266h1v1h-1zM449 245h1v21h-1zM450 238h1v7h-1zM451 258h1v10h-1zM452 226h1v19h-1zM454 262h1v7h-1zM457 271h1v1h-1zM458 256h1v1h-1zM459 230h1v30h-1zM460 262h1v21h-1zM461 233h1v5h-1zM462 238h1v31h-1zM463 269h1v18h-1zM464 224h1v35h-1zM466 277h1v3h-1zM467 231h1v19h-1zM469 268h1v24h-1zM472 259h1v13h-1zM473 236h1v3h-1zM474 239h1v30h-1zM475 268h1v9h-1zM476 226h1v23h-1zM477 250h1v34h-1zM479 235h1v21h-1zM482 231h1v12h-1zM484 258h1v14h-1zM485 231h1v1h-1zM487 253h1v23h-1zM488 228h1v9h-1zM489 237h1v41h-1zM490 278h1v8h-1zM492 226h1v26h-1zM493 255h1v17h-1zM494 220h1v35h-1zM496 272h1v7h-1zM497 224h1v23h-1zM499 276h1v34h-1zM502 253h1v46h-1zM503 211h1v25h-1zM504 236h1v41h-1zM505 277h1v12h-1zM506 226h1v11h-1zM507 237h1v33h-1zM508 270h1v3h-1zM509 213h1v21h-1zM511 273h1v1h-1zM512 225h1v14h-1zM514 263h1v24h-1zM515 244h1v13h-1zM516 265h1v7h-1zM517 253h1v12h-1zM518 251h1v4h-1zM519 259h1v11h-1zM520 254h1v3h-1zM521 228h1v9h-1zM522 236h1v39h-1zM523 275h1v9h-1zM524 231h1v31h-1zM527 232h1v17h-1zM529 275h1v15h-1zM530 243h1v1h-1zM532 259h1v28h-1zM533 225h1v13h-1zM534 238h1v32h-1zM535 270h1v9h-1zM536 221h1v29h-1zM537 250h1v40h-1zM539 208h1v22h-1zM542 225h1v23h-1zM544 252h1v42h-1zM545 224h1v21h-1zM546 282h1v3h-1zM547 246h1v36h-1zM548 238h1v9h-1zM549 266h1v18h-1zM550 263h1v1h-1zM551 230h1v1h-1zM552 275h1v30h-1zM553 256h1v1h-1zM554 217h1v12h-1zM557 210h1v19h-1zM559 269h1v15h-1zM560 241h1v1h-1zM562 271h1v28h-1zM564 228h1v34h-1zM565 261h1v23h-1zM566 235h1v7h-1zM567 242h1v33h-1zM568 275h1v4h-1zM569 205h1v29h-1zM572 222h1v14h-1zM574 266h1v22h-1zM575 243h1v2h-1zM576 268h1v1h-1zM577 247h1v26h-1zM578 235h1v12h-1zM579 257h1v23h-1zM581 228h1v3h-1zM582 258h1v24h-1zM584 235h1v13h-1zM585 253h1v7h-1zM586 264h1v5h-1zM587 243h1v9h-1zM589 267h1v19h-1zM592 266h1v18h-1zM594 225h1v40h-1zM595 265h1v19h-1zM596 231h1v16h-1zM597 246h1v31h-1zM599 213h1v23h-1zM600 246h1v1h-1zM602 222h1v24h-1zM604 271h1v23h-1zM607 277h1v27h-1zM609 223h1v52h-1zM610 275h1v29h-1zM611 213h1v10h-1zM612 223h1v45h-1zM613 275h1v9h-1zM614 252h1v23h-1zM615 232h1v20h-1zM616 268h1v18h-1zM617 228h1v41h-1zM618 228h1v1h-1zM619 260h1v21h-1zM621 233h1v3h-1zM622 270h1v24h-1zM624 213h1v18h-1zM627 221h1v29h-1zM628 278h1v4h-1zM629 241h1v37h-1zM630 226h1v16h-1zM631 257h1v15h-1zM632 218h1v23h-1zM634 264h1v20h-1zM637 271h1v25h-1zM638 232h1v6h-1zM639 238h1v29h-1zM640 266h1v11h-1zM642 225h1v22h-1zM643 266h1v12h-1zM644 234h1v32h-1zM646 269h1v3h-1zM647 235h1v14h-1zM649 276h1v8h-1zM652 271h1v23h-1zM654 226h1v23h-1zM655 279h1v1h-1zM657 230h1v18h-1zM658 281h1v1h-1zM659 253h1v37h-1zM660 229h1v25h-1zM661 273h1v29h-1zM662 218h1v55h-1zM664 273h1v27h-1zM667 278h1v30h-1zM669 231h1v17h-1zM670 283h1v1h-1zM672 210h1v30h-1zM673 271h1v4h-1zM674 235h1v37h-1zM675 221h1v14h-1zM676 270h1v7h-1zM677 250h1v20h-1zM678 233h1v17h-1zM679 265h1v32h-1zM681 236h1v1h-1zM682 265h1v16h-1zM684 220h1v15h-1zM687 228h1v16h-1zM688 275h1v1h-1zM689 250h1v25h-1zM690 235h1v5h-1zM691 250h1v9h-1zM692 233h1v17h-1zM693 233h1v2h-1zM694 258h1v29h-1zM695 276h1v1h-1zM696 235h1v12h-1zM697 259h1v22h-1zM698 246h1v1h-1zM699 215h1v26h-1zM700 275h1v5h-1zM702 225h1v37h-1zM703 261h1v25h-1zM704 218h1v39h-1zM706 279h1v6h-1zM707 234h1v20h-1zM709 276h1v22h-1zM712 268h1v11h-1zM714 229h1v16h-1zM715 269h1v6h-1zM717 231h1v44h-1zM718 275h1v10h-1zM719 229h1v25h-1zM722 228h1v22h-1zM724 285h1v13h-1zM727 280h1v20h-1zM729 215h1v42h-1zM730 261h1v28h-1zM731 218h1v18h-1zM732 236h1v46h-1zM733 282h1v8h-1zM734 213h1v37h-1zM737 217h1v27h-1zM739 267h1v31h-1zM742 271h1v16h-1zM744 231h1v25h-1zM745 273h1v7h-1zM747 248h1v14h-1zM748 261h1v8h-1zM749 236h1v19h-1zM750 235h1v2h-1zM751 255h1v14h-1zM752 238h1v17h-1zM753 236h1v2h-1zM754 256h1v13h-1zM755 248h1v1h-1zM757 261h1v16h-1zM759 237h1v19h-1zM760 261h1v9h-1zM762 235h1v37h-1zM763 271h1v6h-1zM764 228h1v21h-1zM766 280h1v1h-1zM767 216h1v27h-1zM769 269h1v20h-1zM770 228h1v1h-1zM772 275h1v19h-1zM773 242h1v1h-1zM774 243h1v34h-1zM775 276h1v12h-1zM776 230h1v14h-1zM777 244h1v27h-1zM778 271h1v9h-1zM779 231h1v23h-1zM781 275h1v2h-1zM782 230h1v17h-1zM784 264h1v19h-1zM785 241h1v1h-1zM787 280h1v15h-1zM788 241h1v1h-1z'/>
<rect x="130" y="40" width="2" height="373" fill="#4a4608"/>
<rect x="149" y="40" width="1" height="373" fill="#a09400"/>
<!-- markers -->
<g fill="none" stroke="#a89c00" stroke-width="1">
<rect x="127.5" y="413.5" width="6" height="6.5" rx="1"/>
<rect x="146.5" y="413.5" width="6" height="6.5" rx="1"/>
<rect x="146.5" y="420.5" width="6" height="6" rx="1"/>
<path d="M147.5 419 L149.5 414.5 L151.5 419 Z"/>
</g>
<rect x="127" y="420" width="7" height="7" rx="1" fill="#a89c00"/>
<path d="M128.5 426 L130.5 421.5 L132.5 426 Z" fill="#000"/>
<path d="M106.6 250 h1.9 v6.6 h-1.9 v-4.2 l-1.4 0.9 v-1.7z" fill="#f03830"/>
<path d="M110.5 251.6 l3.6 2.5 l-3.6 2.5z" fill="#f03830"/><rect x="109.5" y="253.5" width="1.5" height="1.2" fill="#f03830"/>
</g>
</svg>
<!-- v scrollbar -->
<div class="a" style="left:789px;top:40px;width:11px;height:387px;background:linear-gradient(90deg,#e6e6e6,#f0f0f0 40%,#e9e9e9);"></div>
<svg style="left:789px;top:40px" width="11" height="387"><path d="M3.5 6.5 L5.5 4.2 L7.5 6.5 Z" fill="#383838"/><path d="M3.5 381 L5.5 383.3 L7.5 381 Z" fill="#383838"/></svg>
<div class="a" style="left:790px;top:227px;width:8px;height:9px;background:linear-gradient(90deg,#fafafa,#f0f0f0 40%,#d8d8d8);border:1px solid #b6b6b6;border-radius:2px;box-sizing:border-box;"></div>
<!-- h scrollbar -->
<div class="a" style="left:102px;top:427px;width:698px;height:11px;background:linear-gradient(#e4e4e4,#f0f0f0 40%,#e8e8e8);"></div>
<svg style="left:102px;top:427px" width="698" height="11"><path d="M6 3.5 L3.8 5.5 L6 7.5 Z" fill="#383838"/><path d="M681.2 3.5 L683.4 5.5 L681.2 7.5 Z" fill="#383838"/></svg>
<div class="a" style="left:232px;top:428px;width:10px;height:9px;background:linear-gradient(#fafafa,#f0f0f0 40%,#d8d8d8);border:1px solid #b6b6b6;border-radius:2px;box-sizing:border-box;"></div>
<!-- status bar -->
<div class="a" style="left:0;top:437px;width:800px;height:13px;background:#f0eeee;"></div>
<div class="a" style="left:0;top:437px;width:800px;height:3px;background:linear-gradient(#c4c4c4,#e6e6e6);"></div>
<div class="a" style="left:0;top:448px;width:800px;height:2px;background:#b8b8b8;"></div>
<div class="a" style="left:607px;top:440px;width:1px;height:8px;background:#c8c8c8;"></div>
<div class="a" style="left:789px;top:440px;width:1px;height:8px;background:#c8c8c8;"></div>
<span class='t' style='left:12.44px;top:2.53px;font-size:7.41px;color:#101010;transform:scaleX(0.943)'>USB Oscilloscope - C:\Users\Rai\Desktop\Замер Pride  10мин 500Вт.mwf</span>
<span class='t' style='left:3.25px;top:14.93px;font-size:7.41px;color:#101018;transform:scaleX(0.968)'>Файл</span>
<span class='t' style='left:28.27px;top:14.93px;font-size:7.41px;color:#101018;transform:scaleX(0.969)'>Управление</span>
<span class='t' style='left:75.27px;top:14.93px;font-size:7.41px;color:#101018;transform:scaleX(0.971)'>Операции</span>
<span class='t' style='left:116.48px;top:14.93px;font-size:7.41px;color:#101018;transform:scaleX(0.994)'>Закладки</span>
<span class='t' style='left:155.53px;top:14.93px;font-size:7.41px;color:#101018;transform:scaleX(0.900)'>Анализ</span>
<span class='t' style='left:186.27px;top:14.93px;font-size:7.41px;color:#101018;transform:scaleX(0.970)'>Отображать</span>
<span class='t' style='left:232.24px;top:14.93px;font-size:7.41px;color:#101018;transform:scaleX(1.010)'>Утилиты</span>
<span class='t' style='left:268.19px;top:14.93px;font-size:7.41px;color:#101018;transform:scaleX(1.072)'>Помощь</span>
<span class='t' style='left:16.18px;top:44.52px;font-size:8.37px;color:#22222e;transform:scaleX(0.939)'>Старт устройства</span>
<span class='t' style='left:16.48px;top:58.00px;font-size:8.50px;color:#22222e;transform:scaleX(0.901)'>Режимы</span>
<span class='t' style='left:13.76px;top:72.98px;font-size:8.64px;color:#22222e;transform:scaleX(0.879)'>1:200</span>
<span class='t' style='left:53.12px;top:72.98px;font-size:8.64px;color:#22222e;transform:scaleX(0.917)'>:0.1 s</span>
<span class='t' style='left:2.69px;top:87.52px;font-size:10.01px;color:#111;transform:scaleX(1.000)'>1</span>
<span class='t' style='left:47.96px;top:87.92px;font-size:9.19px;color:#22222e;transform:scaleX(0.862)'>10 V</span>
<span class='t' style='left:2.87px;top:101.12px;font-size:10.01px;color:#111;transform:scaleX(1.000)'>2</span>
<span class='t' style='left:48.20px;top:101.52px;font-size:9.19px;color:#22222e;transform:scaleX(0.847)'>-0.1 V</span>
<span class='t' style='left:3.18px;top:114.72px;font-size:10.01px;color:#111;transform:scaleX(1.000)'>3</span>
<span class='t' style='left:48.20px;top:115.12px;font-size:9.19px;color:#22222e;transform:scaleX(0.847)'>-0.1 V</span>
<span class='t' style='left:3.23px;top:128.32px;font-size:10.01px;color:#111;transform:scaleX(1.000)'>4</span>
<span class='t' style='left:48.05px;top:128.72px;font-size:9.19px;color:#22222e;transform:scaleX(0.765)'>1 V</span>
<span class='t' style='left:14.08px;top:143.09px;font-size:10.29px;color:#111;transform:scaleX(1.000)'>1</span>
<span class='t' style='left:45.40px;top:143.29px;font-size:9.47px;color:#22222e;transform:scaleX(0.833)'>:0 V</span>
<span class='t' style='left:15.07px;top:157.28px;font-size:8.64px;color:#22222e;transform:scaleX(0.869)'>0000:03:39.232.00</span>
<span class='t' style='left:4.17px;top:170.73px;font-size:11.30px;color:#111;transform:scaleX(1.000)'>A</span>
<span class='t' style='left:12.91px;top:173.07px;font-size:7.96px;color:#22222e;transform:scaleX(0.943)'>:0000:03:39.460.00</span>
<span class='t' style='left:4.41px;top:184.83px;font-size:10.60px;color:#111;transform:scaleX(1.000)'>B</span>
<span class='t' style='left:11.72px;top:187.10px;font-size:7.68px;color:#22222e;transform:scaleX(0.990)'>:0000:03:39.332.00</span>
<span class='t' style='left:2.90px;top:214.30px;font-size:7.68px;color:#111;font-weight:700;transform:scaleX(0.833)'>1</span>
<span class='t' style='left:10.11px;top:214.30px;font-size:7.68px;color:#3a2a4a;transform:scaleX(1.053)'>in1</span>
<span class='t' style='left:3.48px;top:258.30px;font-size:7.68px;color:#111;font-weight:700;transform:scaleX(0.803)'>3</span>
<span class='t' style='left:10.15px;top:258.30px;font-size:7.68px;color:#3a2a4a;transform:scaleX(0.964)'>in3</span>
<span class='t' style='left:3.71px;top:301.80px;font-size:7.68px;color:#111;font-weight:700;transform:scaleX(0.789)'>4</span>
<span class='t' style='left:10.15px;top:301.80px;font-size:7.68px;color:#3a2a4a;transform:scaleX(0.986)'>in4</span>
<span class='t' style='left:2.03px;top:345.16px;font-size:7.13px;color:#3a3a4a;transform:scaleX(1.066)'>A-B интервал</span>
<span class='t' style='left:2.39px;top:226.45px;font-size:16.60px;color:#111;transform:scaleX(0.969)'>A:-18.44 V</span>
<span class='t' style='left:2.13px;top:241.35px;font-size:16.60px;color:#111;transform:scaleX(0.971)'>Δ:-43.86 V</span>
<span class='t' style='left:2.42px;top:269.55px;font-size:16.60px;color:#111;transform:scaleX(0.960)'>A:-32.97 mV</span>
<span class='t' style='left:2.12px;top:285.15px;font-size:16.60px;color:#111;transform:scaleX(0.966)'>Δ:0 V</span>
<span class='t' style='left:2.42px;top:314.05px;font-size:16.60px;color:#111;transform:scaleX(0.954)'>A:25.64 mV</span>
<span class='t' style='left:2.12px;top:329.05px;font-size:16.60px;color:#111;transform:scaleX(0.966)'>Δ:0 V</span>
<span class='t' style='left:4.76px;top:355.95px;font-size:16.60px;color:#111;transform:scaleX(0.957)'>T:-128 ms</span>
<span class='t' style='left:2.75px;top:371.15px;font-size:16.60px;color:#111;transform:scaleX(0.960)'>F:7.813 Hz</span>
<span class='t' style='left:1.35px;top:441.33px;font-size:7.41px;color:#101018;transform:scaleX(0.950)'>Изменение положения измерительного маркера B</span>
<span class='t' style='left:609.85px;top:441.33px;font-size:7.41px;color:#101018;transform:scaleX(0.897)'>Полное время файла: 0000:20:06.042.88</span>
</body></html>
